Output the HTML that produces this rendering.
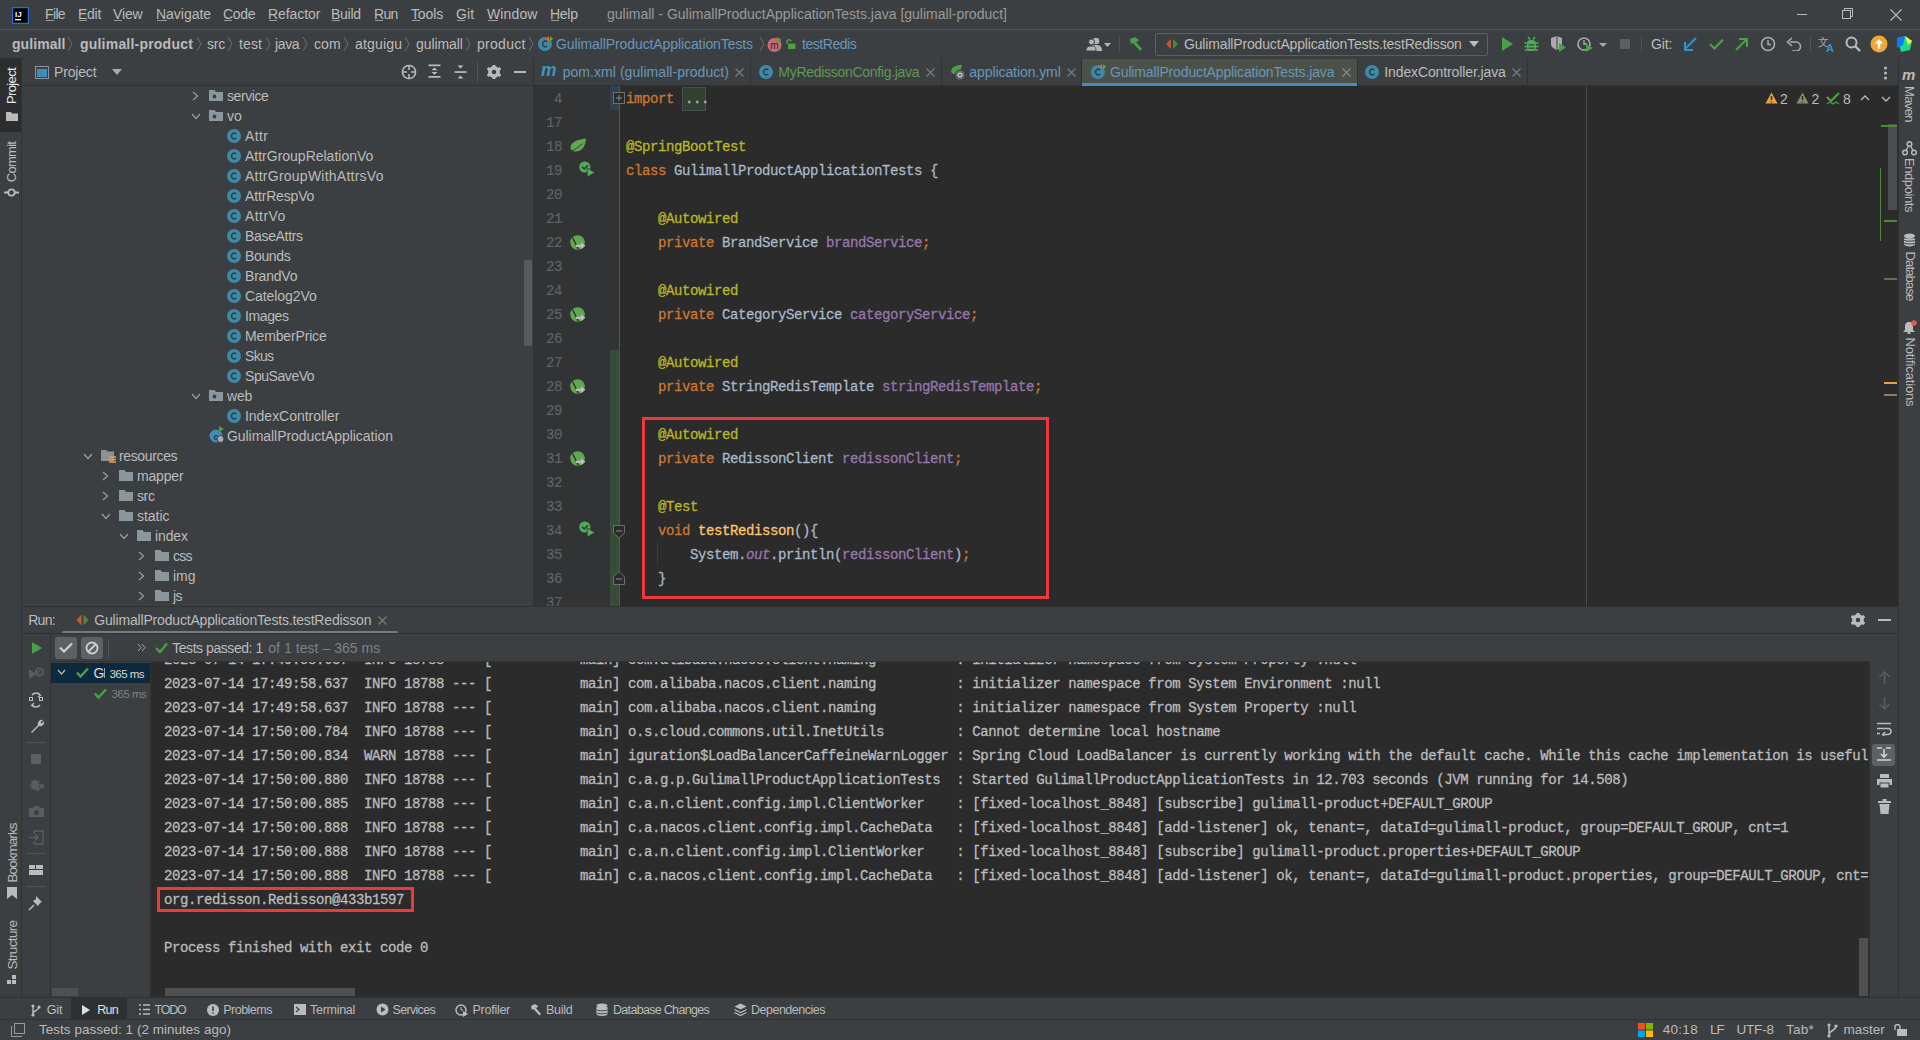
<!DOCTYPE html>
<html><head><meta charset="utf-8"><style>
html,body{margin:0;padding:0;width:1920px;height:1040px;overflow:hidden;background:#3c3f41;}
body>div,body>svg,.abs>div,.abs>svg{position:absolute;}
.t{white-space:pre;}
</style></head><body>
<div style="left:0px;top:0px;width:1920px;height:29px;background:#3c3f41;"></div>
<div style="left:0px;top:29px;width:1920px;height:1px;background:#515456;"></div>
<svg style="left:12px;top:7px;" width="17" height="17" viewBox="0 0 17 17"><rect x="0.5" y="0.5" width="16" height="16" fill="#000" stroke="#1f6fe5" stroke-width="1.5"/><text x="3" y="9.5" font-family="Liberation Sans" font-weight="700" font-size="8" fill="#fff">IJ</text><rect x="3" y="12" width="6" height="1.3" fill="#fff"/></svg>
<div class="t" style="left:45px;top:4.00px;line-height:20px;font-size:14px;color:#bbbbbb;font-weight:400;font-family:'Liberation Sans', sans-serif;letter-spacing:-0.640px;">File</div>
<div style="left:46px;top:20px;width:8px;height:1px;background:#9a9a9a;"></div>
<div class="t" style="left:78px;top:4.00px;line-height:20px;font-size:14px;color:#bbbbbb;font-weight:400;font-family:'Liberation Sans', sans-serif;letter-spacing:-0.281px;">Edit</div>
<div style="left:79px;top:20px;width:8px;height:1px;background:#9a9a9a;"></div>
<div class="t" style="left:113px;top:4.00px;line-height:20px;font-size:14px;color:#bbbbbb;font-weight:400;font-family:'Liberation Sans', sans-serif;letter-spacing:-0.123px;">View</div>
<div style="left:114px;top:20px;width:8px;height:1px;background:#9a9a9a;"></div>
<div class="t" style="left:156px;top:4.00px;line-height:20px;font-size:14px;color:#bbbbbb;font-weight:400;font-family:'Liberation Sans', sans-serif;letter-spacing:-0.032px;">Navigate</div>
<div style="left:157px;top:20px;width:10px;height:1px;background:#9a9a9a;"></div>
<div class="t" style="left:223px;top:4.00px;line-height:20px;font-size:14px;color:#bbbbbb;font-weight:400;font-family:'Liberation Sans', sans-serif;letter-spacing:-0.292px;">Code</div>
<div style="left:224px;top:20px;width:8px;height:1px;background:#9a9a9a;"></div>
<div class="t" style="left:268px;top:4.00px;line-height:20px;font-size:14px;color:#bbbbbb;font-weight:400;font-family:'Liberation Sans', sans-serif;letter-spacing:-0.076px;">Refactor</div>
<div style="left:269px;top:20px;width:8px;height:1px;background:#9a9a9a;"></div>
<div class="t" style="left:331px;top:4.00px;line-height:20px;font-size:14px;color:#bbbbbb;font-weight:400;font-family:'Liberation Sans', sans-serif;letter-spacing:-0.286px;">Build</div>
<div style="left:332px;top:20px;width:8px;height:1px;background:#9a9a9a;"></div>
<div class="t" style="left:374px;top:4.00px;line-height:20px;font-size:14px;color:#bbbbbb;font-weight:400;font-family:'Liberation Sans', sans-serif;letter-spacing:-0.661px;">Run</div>
<div style="left:375px;top:20px;width:8px;height:1px;background:#9a9a9a;"></div>
<div class="t" style="left:411px;top:4.00px;line-height:20px;font-size:14px;color:#bbbbbb;font-weight:400;font-family:'Liberation Sans', sans-serif;letter-spacing:-0.137px;">Tools</div>
<div style="left:412px;top:20px;width:8px;height:1px;background:#9a9a9a;"></div>
<div class="t" style="left:456px;top:4.00px;line-height:20px;font-size:14px;color:#bbbbbb;font-weight:400;font-family:'Liberation Sans', sans-serif;letter-spacing:0.137px;">Git</div>
<div style="left:457px;top:20px;width:8px;height:1px;background:#9a9a9a;"></div>
<div class="t" style="left:487px;top:4.00px;line-height:20px;font-size:14px;color:#bbbbbb;font-weight:400;font-family:'Liberation Sans', sans-serif;letter-spacing:0.134px;">Window</div>
<div style="left:488px;top:20px;width:10px;height:1px;background:#9a9a9a;"></div>
<div class="t" style="left:550px;top:4.00px;line-height:20px;font-size:14px;color:#bbbbbb;font-weight:400;font-family:'Liberation Sans', sans-serif;letter-spacing:-0.273px;">Help</div>
<div style="left:551px;top:20px;width:8px;height:1px;background:#9a9a9a;"></div>
<div class="t" style="left:607px;top:4.00px;line-height:20px;font-size:14px;color:#9a9a9a;font-weight:400;font-family:'Liberation Sans', sans-serif;letter-spacing:0.001px;">gulimall - GulimallProductApplicationTests.java [gulimall-product]</div>
<div style="left:1797px;top:14px;width:10px;height:1px;background:#bbbbbb;"></div>
<svg style="left:1842px;top:8px;" width="13" height="12" viewBox="0 0 13 12"><rect x="0.5" y="2.5" width="8" height="8" fill="none" stroke="#bbb"/><path d="M2.5 2.5V0.5H10.5V8.5H8.5" fill="none" stroke="#bbb"/></svg>
<svg style="left:1890px;top:9px;" width="12" height="12" viewBox="0 0 12 12"><path d="M0.5 0.5L11.5 11.5M11.5 0.5L0.5 11.5" stroke="#bbb" stroke-width="1.1"/></svg>
<div style="left:0px;top:30px;width:1920px;height:28px;background:#3c3f41;"></div>
<div style="left:0px;top:58px;width:1920px;height:1px;background:#2f3133;"></div>
<div class="t" style="left:12px;top:34.00px;line-height:20px;font-size:14px;color:#bbbbbb;font-weight:700;font-family:'Liberation Sans', sans-serif;letter-spacing:0.063px;">gulimall</div>
<svg style="left:67px;top:36px;" width="7" height="16" viewBox="0 0 7 16"><path d="M1 1L5 8L1 15" fill="none" stroke="#6e6e6e" stroke-width="1"/></svg>
<div class="t" style="left:80px;top:34.00px;line-height:20px;font-size:14px;color:#bbbbbb;font-weight:700;font-family:'Liberation Sans', sans-serif;letter-spacing:0.209px;">gulimall-product</div>
<svg style="left:196px;top:36px;" width="7" height="16" viewBox="0 0 7 16"><path d="M1 1L5 8L1 15" fill="none" stroke="#6e6e6e" stroke-width="1"/></svg>
<div class="t" style="left:207px;top:34.00px;line-height:20px;font-size:14px;color:#bbbbbb;font-weight:400;font-family:'Liberation Sans', sans-serif;letter-spacing:-0.221px;">src</div>
<svg style="left:227px;top:36px;" width="7" height="16" viewBox="0 0 7 16"><path d="M1 1L5 8L1 15" fill="none" stroke="#6e6e6e" stroke-width="1"/></svg>
<div class="t" style="left:239px;top:34.00px;line-height:20px;font-size:14px;color:#bbbbbb;font-weight:400;font-family:'Liberation Sans', sans-serif;letter-spacing:0.109px;">test</div>
<svg style="left:265px;top:36px;" width="7" height="16" viewBox="0 0 7 16"><path d="M1 1L5 8L1 15" fill="none" stroke="#6e6e6e" stroke-width="1"/></svg>
<div class="t" style="left:275px;top:34.00px;line-height:20px;font-size:14px;color:#bbbbbb;font-weight:400;font-family:'Liberation Sans', sans-serif;letter-spacing:-0.346px;">java</div>
<svg style="left:302px;top:36px;" width="7" height="16" viewBox="0 0 7 16"><path d="M1 1L5 8L1 15" fill="none" stroke="#6e6e6e" stroke-width="1"/></svg>
<div class="t" style="left:314px;top:34.00px;line-height:20px;font-size:14px;color:#bbbbbb;font-weight:400;font-family:'Liberation Sans', sans-serif;letter-spacing:0.084px;">com</div>
<svg style="left:343px;top:36px;" width="7" height="16" viewBox="0 0 7 16"><path d="M1 1L5 8L1 15" fill="none" stroke="#6e6e6e" stroke-width="1"/></svg>
<div class="t" style="left:355px;top:34.00px;line-height:20px;font-size:14px;color:#bbbbbb;font-weight:400;font-family:'Liberation Sans', sans-serif;letter-spacing:0.196px;">atguigu</div>
<svg style="left:404px;top:36px;" width="7" height="16" viewBox="0 0 7 16"><path d="M1 1L5 8L1 15" fill="none" stroke="#6e6e6e" stroke-width="1"/></svg>
<div class="t" style="left:416px;top:34.00px;line-height:20px;font-size:14px;color:#bbbbbb;font-weight:400;font-family:'Liberation Sans', sans-serif;letter-spacing:-0.095px;">gulimall</div>
<svg style="left:465px;top:36px;" width="7" height="16" viewBox="0 0 7 16"><path d="M1 1L5 8L1 15" fill="none" stroke="#6e6e6e" stroke-width="1"/></svg>
<div class="t" style="left:477px;top:34.00px;line-height:20px;font-size:14px;color:#bbbbbb;font-weight:400;font-family:'Liberation Sans', sans-serif;letter-spacing:0.286px;">product</div>
<svg style="left:528px;top:36px;" width="7" height="16" viewBox="0 0 7 16"><path d="M1 1L5 8L1 15" fill="none" stroke="#6e6e6e" stroke-width="1"/></svg>
<svg style="left:538px;top:36px;" width="16" height="16" viewBox="0 0 16 16"><circle cx="7.0" cy="8.0" r="7.0" fill="#4089a6"/><path d="M9.24 5.90A2.80 2.80 0 1 0 9.24 10.10" fill="none" stroke="#233f4b" stroke-width="1.3"/><path d="M11 0L8 2.7L11 5.4Z" fill="#f26522"/><path d="M12 0L15.2 2.7L12 5.4Z" fill="#59a83a"/></svg>
<div class="t" style="left:556px;top:34.00px;line-height:20px;font-size:14px;color:#6897bb;font-weight:400;font-family:'Liberation Sans', sans-serif;letter-spacing:-0.096px;">GulimallProductApplicationTests</div>
<svg style="left:759px;top:36px;" width="7" height="16" viewBox="0 0 7 16"><path d="M1 1L5 8L1 15" fill="none" stroke="#6e6e6e" stroke-width="1"/></svg>
<svg style="left:767px;top:36px;" width="19" height="17" viewBox="0 0 19 17"><circle cx="7.5" cy="9" r="7" fill="#c46c79"/><text x="7.5" y="12.5" text-anchor="middle" font-family="Liberation Sans" font-size="10" fill="#2e2224">m</text><path d="M10.5 1L7 4L10.5 7Z" fill="#e0622d"/><path d="M11 1L14.5 4L11 7Z" fill="#4aa046"/></svg>
<svg style="left:786px;top:39px;" width="10" height="10" viewBox="0 0 10 10"><rect x="2" y="4.5" width="7.5" height="5.5" fill="#4aa046"/><path d="M1 5V3A2 2 0 0 1 5 2.5" fill="none" stroke="#4aa046" stroke-width="1.5"/></svg>
<div class="t" style="left:802px;top:34.00px;line-height:20px;font-size:14px;color:#6897bb;font-weight:400;font-family:'Liberation Sans', sans-serif;letter-spacing:-0.451px;">testRedis</div>
<svg style="left:1086px;top:36px;" width="26" height="16" viewBox="0 0 26 16"><circle cx="10" cy="5" r="3.3" fill="#b4b4b4"/><path d="M4 15C4 10 6.5 9 10 9S16 10 16 15Z" fill="#b4b4b4"/><circle cx="5.5" cy="6" r="3" fill="#b4b4b4" stroke="#3c3f41" stroke-width="1"/><path d="M0 15C0 11 2 10 5.5 10S10 11 10 15Z" fill="#b4b4b4" stroke="#3c3f41" stroke-width="1"/><path d="M18 7H25L21.5 11Z" fill="#b4b4b4"/></svg>
<div style="left:1119px;top:36px;width:1px;height:16px;background:#515456;"></div>
<svg style="left:1127px;top:36px;" width="17" height="16" viewBox="0 0 17 16"><path d="M3 3L8 1L12 4L10 6L8 5L15 13L13 15L6 7L4 8Z" fill="#4aa046"/></svg>
<div style="left:1155px;top:33px;width:331px;height:21px;border:1px solid #5e6060;border-radius:2px;box-sizing:content-box;"></div>
<svg style="left:1165px;top:38px;" width="14" height="12" viewBox="0 0 14 12"><path d="M6 1L1 6L6 11Z" fill="#c6582a"/><path d="M8 1L13 6L8 11Z" fill="#4a8a3a"/></svg>
<div class="t" style="left:1184px;top:34.00px;line-height:20px;font-size:14px;color:#bbbbbb;font-weight:400;font-family:'Liberation Sans', sans-serif;letter-spacing:-0.161px;">GulimallProductApplicationTests.testRedisson</div>
<svg style="left:1469px;top:41px;" width="10" height="6" viewBox="0 0 10 6"><path d="M0 0H10L5 6Z" fill="#bbb"/></svg>
<svg style="left:1501px;top:37px;" width="12" height="14" viewBox="0 0 12 14"><path d="M1 0L12 7L1 14Z" fill="#4aa046"/></svg>
<svg style="left:1524px;top:36px;" width="15" height="16" viewBox="0 0 15 16"><rect x="3" y="4" width="9" height="11" rx="4" fill="#4fad5b"/><path d="M0.5 7H14.5M0.5 10.5H14.5M1 14H14M4 1L6 3.5M11 1L9 3.5" stroke="#4fad5b" stroke-width="1.6"/><path d="M4.5 8.8H10.5M4.5 12.2H10.5" stroke="#3c3f41" stroke-width="1.3"/></svg>
<svg style="left:1550px;top:36px;" width="17" height="17" viewBox="0 0 17 17"><path d="M1 2L7 0L12 2V8C12 12 7 14 7 14C7 14 1 12 1 8Z" fill="#aaa"/><path d="M7 0V14" stroke="#3c3f41"/><path d="M9 7L16 11.5L9 16Z" fill="#4aa046"/></svg>
<svg style="left:1577px;top:36px;" width="31" height="17" viewBox="0 0 31 17"><circle cx="7" cy="8" r="6" fill="none" stroke="#aaa" stroke-width="1.6"/><path d="M7 4V8H10" stroke="#aaa" stroke-width="1.4" fill="none"/><path d="M9 8L16 12L9 16Z" fill="#4aa046"/><path d="M22 7H30L26 11Z" fill="#aaa"/></svg>
<div style="left:1620px;top:39px;width:10px;height:10px;background:#5f5f5f;"></div>
<div style="left:1641px;top:36px;width:1px;height:16px;background:#515456;"></div>
<div class="t" style="left:1651px;top:34.00px;line-height:20px;font-size:14px;color:#bbbbbb;font-weight:400;font-family:'Liberation Sans', sans-serif;letter-spacing:-0.120px;">Git:</div>
<svg style="left:1683px;top:37px;" width="15" height="15" viewBox="0 0 15 15"><path d="M13 1L2 12M2 5V13H10" fill="none" stroke="#3592c4" stroke-width="2"/></svg>
<svg style="left:1709px;top:38px;" width="15" height="12" viewBox="0 0 15 12"><path d="M1 6L5.5 10.5L14 1.5" fill="none" stroke="#4aa046" stroke-width="2.2"/></svg>
<svg style="left:1734px;top:37px;" width="15" height="15" viewBox="0 0 15 15"><path d="M2 13L13 2M5 2H13V10" fill="none" stroke="#4aa046" stroke-width="2"/></svg>
<svg style="left:1760px;top:36px;" width="16" height="16" viewBox="0 0 16 16"><circle cx="8" cy="8" r="6.5" fill="none" stroke="#aaa" stroke-width="1.6"/><path d="M8 4V8.5H11" stroke="#aaa" stroke-width="1.5" fill="none"/></svg>
<svg style="left:1786px;top:37px;" width="16" height="14" viewBox="0 0 16 14"><path d="M4 5H10A4.5 4.5 0 0 1 10 14H6" fill="none" stroke="#aaa" stroke-width="1.6"/><path d="M6 1L1.5 5L6 9" fill="none" stroke="#aaa" stroke-width="1.6"/></svg>
<div style="left:1810px;top:36px;width:1px;height:16px;background:#515456;"></div>
<svg style="left:1818px;top:35px;" width="18" height="18" viewBox="0 0 18 18"><text x="0" y="11" font-family="Liberation Sans" font-size="11" fill="#aaa">文</text><text x="8" y="17" font-family="Liberation Sans" font-weight="700" font-size="11" fill="#3592c4">A</text></svg>
<svg style="left:1845px;top:36px;" width="16" height="16" viewBox="0 0 16 16"><circle cx="6.5" cy="6.5" r="5" fill="none" stroke="#bbb" stroke-width="2"/><path d="M10 10L15 15" stroke="#bbb" stroke-width="2.4"/></svg>
<svg style="left:1870px;top:35px;" width="18" height="18" viewBox="0 0 18 18"><circle cx="9" cy="9" r="8.5" fill="#f0a732"/><path d="M9 4L5 8.5H7.8V14H10.2V8.5H13Z" fill="#fff"/></svg>
<svg style="left:1896px;top:35px;" width="17" height="18" viewBox="0 0 17 18"><path d="M1 3L9 1L16 6L14 15L5 17Z" fill="#21d789"/><path d="M1 3L9 1L7 10L1 13Z" fill="#087cfa"/><path d="M9 1L16 6L12 10Z" fill="#fcf84a"/></svg>
<div style="left:0px;top:59px;width:22px;height:938px;background:#3c3f41;"></div>
<div style="left:21px;top:59px;width:1px;height:938px;background:#323232;"></div>
<div style="left:0px;top:59px;width:21px;height:73px;background:#2b2d2f;"></div>
<div class="t" style="left:-16.0px;top:78.0px;width:56px;height:16px;line-height:16px;text-align:center;transform:rotate(-90deg);font-family:'Liberation Sans',sans-serif;font-size:13px;letter-spacing:-0.637px;color:#e6e6e6;">Project</div>
<svg style="left:6px;top:111px;" width="12" height="10" viewBox="0 0 12 10"><path d="M0 1H5L6 2.5H13V10H0Z" fill="#bbb"/></svg>
<div class="t" style="left:-18.2px;top:153.8px;width:60.5px;height:16px;line-height:16px;text-align:center;transform:rotate(-90deg);font-family:'Liberation Sans',sans-serif;font-size:13px;letter-spacing:-0.713px;color:#bbbbbb;">Commit</div>
<svg style="left:4px;top:187px;" width="15" height="11" viewBox="0 0 15 11"><circle cx="7.5" cy="5.5" r="3.2" fill="none" stroke="#bbb" stroke-width="1.8"/><path d="M0 5.5H4M11 5.5H15" stroke="#bbb" stroke-width="1.8"/></svg>
<div class="t" style="left:-27.5px;top:844.5px;width:79px;height:16px;line-height:16px;text-align:center;transform:rotate(-90deg);font-family:'Liberation Sans',sans-serif;font-size:13.5px;letter-spacing:-0.947px;color:#bbbbbb;">Bookmarks</div>
<svg style="left:7px;top:887px;" width="10" height="12" viewBox="0 0 10 12"><path d="M0 0H10V12L5 8L0 12Z" fill="#bbb"/></svg>
<div class="t" style="left:-22.5px;top:936.5px;width:69px;height:16px;line-height:16px;text-align:center;transform:rotate(-90deg);font-family:'Liberation Sans',sans-serif;font-size:13.5px;letter-spacing:-0.641px;color:#bbbbbb;">Structure</div>
<svg style="left:7px;top:975px;" width="10" height="10" viewBox="0 0 10 10"><rect x="5" y="0" width="4" height="4" fill="#bbb"/><rect x="0" y="5" width="4" height="4" fill="#bbb"/><rect x="5" y="5" width="4" height="4" fill="#bbb"/></svg>
<div style="left:1898px;top:58px;width:22px;height:939px;background:#3c3f41;"></div>
<div style="left:1898px;top:58px;width:1px;height:939px;background:#323232;"></div>
<svg style="left:1902px;top:68px;" width="15" height="13" viewBox="0 0 15 13"><text x="0" y="12" font-family="Liberation Sans" font-style="italic" font-weight="700" font-size="15" fill="#bbb">m</text></svg>
<div class="t" style="left:1881.0px;top:96.0px;width:56px;height:16px;line-height:16px;text-align:center;transform:rotate(90deg);font-family:'Liberation Sans',sans-serif;font-size:13px;letter-spacing:-0.604px;color:#bbbbbb;">Maven</div>
<svg style="left:1902px;top:141px;" width="15" height="15" viewBox="0 0 15 15"><circle cx="7.5" cy="3" r="2.3" fill="none" stroke="#bbb" stroke-width="1.5"/><circle cx="3" cy="11.5" r="2.3" fill="none" stroke="#bbb" stroke-width="1.5"/><circle cx="12" cy="11.5" r="2.3" fill="none" stroke="#bbb" stroke-width="1.5"/><path d="M6.5 5L4 9.5M8.5 5L11 9.5" stroke="#bbb" stroke-width="1.4"/></svg>
<div class="t" style="left:1872.0px;top:177.0px;width:74px;height:16px;line-height:16px;text-align:center;transform:rotate(90deg);font-family:'Liberation Sans',sans-serif;font-size:13px;letter-spacing:-0.425px;color:#bbbbbb;">Endpoints</div>
<svg style="left:1903px;top:233px;" width="13" height="14" viewBox="0 0 13 14"><ellipse cx="6.5" cy="3" rx="5.5" ry="2.5" fill="#bbb"/><path d="M1 5.5V11C1 12.5 3.5 13.5 6.5 13.5S12 12.5 12 11V5.5" fill="#bbb"/><path d="M1 7.2C2 8.5 11 8.5 12 7.2M1 10C2 11.3 11 11.3 12 10" stroke="#3c3f41" fill="none"/></svg>
<div class="t" style="left:1874.5px;top:267.5px;width:69px;height:16px;line-height:16px;text-align:center;transform:rotate(90deg);font-family:'Liberation Sans',sans-serif;font-size:13px;letter-spacing:-0.831px;color:#bbbbbb;">Database</div>
<svg style="left:1902px;top:320px;" width="15" height="14" viewBox="0 0 15 14"><path d="M7 2C4 2 3 4 3 7V10L1 12H13L11 10V7C11 4 10 2 7 2Z" fill="#bbb"/><circle cx="7" cy="13" r="1.5" fill="#bbb"/><circle cx="12" cy="3" r="2.8" fill="#e55757"/></svg>
<div class="t" style="left:1864.5px;top:363.5px;width:89px;height:16px;line-height:16px;text-align:center;transform:rotate(90deg);font-family:'Liberation Sans',sans-serif;font-size:13px;letter-spacing:-0.139px;color:#bbbbbb;">Notifications</div>
<div style="left:22px;top:58px;width:511px;height:548px;background:#3c3f41;"></div>
<div style="left:22px;top:85px;width:511px;height:1px;background:#323232;"></div>
<svg style="left:35px;top:66px;" width="14" height="13" viewBox="0 0 14 13"><rect x="0.5" y="0.5" width="13" height="12" fill="none" stroke="#8a9399"/><rect x="2" y="3" width="10" height="8" fill="#3d8eb9"/></svg>
<div class="t" style="left:54px;top:62.00px;line-height:20px;font-size:14px;color:#bbbbbb;font-weight:400;font-family:'Liberation Sans', sans-serif;letter-spacing:-0.168px;">Project</div>
<svg style="left:112px;top:69px;" width="10" height="6" viewBox="0 0 10 6"><path d="M0 0H10L5 6Z" fill="#aaa"/></svg>
<svg style="left:401px;top:64px;" width="16" height="16" viewBox="0 0 16 16"><circle cx="8" cy="8" r="6.6" fill="none" stroke="#bbb" stroke-width="1.5"/><path d="M8 2V6M8 10V14M2 8H6M10 8H14" stroke="#bbb" stroke-width="1.5"/></svg>
<svg style="left:428px;top:64px;" width="13" height="14" viewBox="0 0 13 14"><rect x="0.5" y="0.5" width="12" height="1.7" fill="#bbb"/><rect x="0.5" y="12" width="12" height="1.7" fill="#bbb"/><path d="M3.5 6.2H9.5L6.5 3.4Z M3.5 8H9.5L6.5 10.8Z" fill="#bbb"/></svg>
<svg style="left:454px;top:65px;" width="13" height="14" viewBox="0 0 13 14"><rect x="0.5" y="6.2" width="12" height="1.7" fill="#bbb"/><path d="M3.5 0.5H9.5L6.5 3.5Z M3.5 13.5H9.5L6.5 10.5Z" fill="#bbb"/></svg>
<div style="left:477px;top:62px;width:1px;height:20px;background:#515456;"></div>
<svg style="left:487px;top:65px;" width="14" height="14" viewBox="0 0 14 14"><circle cx="7" cy="7" r="4.1" fill="none" stroke="#bbb" stroke-width="3.6"/><rect x="5.5" y="-0.6" width="3" height="3.5" rx="0.6" fill="#bbb" transform="rotate(0 7 7)"/><rect x="5.5" y="-0.6" width="3" height="3.5" rx="0.6" fill="#bbb" transform="rotate(60 7 7)"/><rect x="5.5" y="-0.6" width="3" height="3.5" rx="0.6" fill="#bbb" transform="rotate(120 7 7)"/><rect x="5.5" y="-0.6" width="3" height="3.5" rx="0.6" fill="#bbb" transform="rotate(180 7 7)"/><rect x="5.5" y="-0.6" width="3" height="3.5" rx="0.6" fill="#bbb" transform="rotate(240 7 7)"/><rect x="5.5" y="-0.6" width="3" height="3.5" rx="0.6" fill="#bbb" transform="rotate(300 7 7)"/></svg>
<div style="left:514px;top:71px;width:12px;height:2px;background:#bbb;"></div>
<div class="abs" style="left:0;top:0;width:533px;height:605px;overflow:hidden;">
<svg style="left:192px;top:91px;" width="7" height="10" viewBox="0 0 7 10"><path d="M1 1L5.5 5L1 9" fill="none" stroke="#9a9a9a" stroke-width="1.3"/></svg>
<svg style="left:209px;top:90px;" width="14" height="12" viewBox="0 0 14 12"><path d="M0 0H5.5L7 2H14V11H0Z" fill="#8c969d"/><circle cx="5.5" cy="6.5" r="1.9" fill="#3c3f41"/></svg>
<div class="t" style="left:227px;top:86.00px;line-height:20px;font-size:14px;color:#bbbbbb;font-weight:400;font-family:'Liberation Sans', sans-serif;letter-spacing:-0.421px;">service</div>
<svg style="left:191px;top:113px;" width="10" height="7" viewBox="0 0 10 7"><path d="M1 1L5 5.5L9 1" fill="none" stroke="#9a9a9a" stroke-width="1.3"/></svg>
<svg style="left:209px;top:110px;" width="14" height="12" viewBox="0 0 14 12"><path d="M0 0H5.5L7 2H14V11H0Z" fill="#8c969d"/><circle cx="5.5" cy="6.5" r="1.9" fill="#3c3f41"/></svg>
<div class="t" style="left:227px;top:106.00px;line-height:20px;font-size:14px;color:#bbbbbb;font-weight:400;font-family:'Liberation Sans', sans-serif;letter-spacing:0.107px;">vo</div>
<svg style="left:227px;top:128px;" width="16" height="16" viewBox="0 0 16 16"><circle cx="7.0" cy="8.0" r="7.0" fill="#4089a6"/><path d="M9.24 5.90A2.80 2.80 0 1 0 9.24 10.10" fill="none" stroke="#233f4b" stroke-width="1.3"/></svg>
<div class="t" style="left:245px;top:126.00px;line-height:20px;font-size:14px;color:#bbbbbb;font-weight:400;font-family:'Liberation Sans', sans-serif;letter-spacing:0.405px;">Attr</div>
<svg style="left:227px;top:148px;" width="16" height="16" viewBox="0 0 16 16"><circle cx="7.0" cy="8.0" r="7.0" fill="#4089a6"/><path d="M9.24 5.90A2.80 2.80 0 1 0 9.24 10.10" fill="none" stroke="#233f4b" stroke-width="1.3"/></svg>
<div class="t" style="left:245px;top:146.00px;line-height:20px;font-size:14px;color:#bbbbbb;font-weight:400;font-family:'Liberation Sans', sans-serif;letter-spacing:-0.006px;">AttrGroupRelationVo</div>
<svg style="left:227px;top:168px;" width="16" height="16" viewBox="0 0 16 16"><circle cx="7.0" cy="8.0" r="7.0" fill="#4089a6"/><path d="M9.24 5.90A2.80 2.80 0 1 0 9.24 10.10" fill="none" stroke="#233f4b" stroke-width="1.3"/></svg>
<div class="t" style="left:245px;top:166.00px;line-height:20px;font-size:14px;color:#bbbbbb;font-weight:400;font-family:'Liberation Sans', sans-serif;letter-spacing:0.244px;">AttrGroupWithAttrsVo</div>
<svg style="left:227px;top:188px;" width="16" height="16" viewBox="0 0 16 16"><circle cx="7.0" cy="8.0" r="7.0" fill="#4089a6"/><path d="M9.24 5.90A2.80 2.80 0 1 0 9.24 10.10" fill="none" stroke="#233f4b" stroke-width="1.3"/></svg>
<div class="t" style="left:245px;top:186.00px;line-height:20px;font-size:14px;color:#bbbbbb;font-weight:400;font-family:'Liberation Sans', sans-serif;letter-spacing:-0.161px;">AttrRespVo</div>
<svg style="left:227px;top:208px;" width="16" height="16" viewBox="0 0 16 16"><circle cx="7.0" cy="8.0" r="7.0" fill="#4089a6"/><path d="M9.24 5.90A2.80 2.80 0 1 0 9.24 10.10" fill="none" stroke="#233f4b" stroke-width="1.3"/></svg>
<div class="t" style="left:245px;top:206.00px;line-height:20px;font-size:14px;color:#bbbbbb;font-weight:400;font-family:'Liberation Sans', sans-serif;letter-spacing:0.445px;">AttrVo</div>
<svg style="left:227px;top:228px;" width="16" height="16" viewBox="0 0 16 16"><circle cx="7.0" cy="8.0" r="7.0" fill="#4089a6"/><path d="M9.24 5.90A2.80 2.80 0 1 0 9.24 10.10" fill="none" stroke="#233f4b" stroke-width="1.3"/></svg>
<div class="t" style="left:245px;top:226.00px;line-height:20px;font-size:14px;color:#bbbbbb;font-weight:400;font-family:'Liberation Sans', sans-serif;letter-spacing:-0.332px;">BaseAttrs</div>
<svg style="left:227px;top:248px;" width="16" height="16" viewBox="0 0 16 16"><circle cx="7.0" cy="8.0" r="7.0" fill="#4089a6"/><path d="M9.24 5.90A2.80 2.80 0 1 0 9.24 10.10" fill="none" stroke="#233f4b" stroke-width="1.3"/></svg>
<div class="t" style="left:245px;top:246.00px;line-height:20px;font-size:14px;color:#bbbbbb;font-weight:400;font-family:'Liberation Sans', sans-serif;letter-spacing:-0.364px;">Bounds</div>
<svg style="left:227px;top:268px;" width="16" height="16" viewBox="0 0 16 16"><circle cx="7.0" cy="8.0" r="7.0" fill="#4089a6"/><path d="M9.24 5.90A2.80 2.80 0 1 0 9.24 10.10" fill="none" stroke="#233f4b" stroke-width="1.3"/></svg>
<div class="t" style="left:245px;top:266.00px;line-height:20px;font-size:14px;color:#bbbbbb;font-weight:400;font-family:'Liberation Sans', sans-serif;letter-spacing:-0.202px;">BrandVo</div>
<svg style="left:227px;top:288px;" width="16" height="16" viewBox="0 0 16 16"><circle cx="7.0" cy="8.0" r="7.0" fill="#4089a6"/><path d="M9.24 5.90A2.80 2.80 0 1 0 9.24 10.10" fill="none" stroke="#233f4b" stroke-width="1.3"/></svg>
<div class="t" style="left:245px;top:286.00px;line-height:20px;font-size:14px;color:#bbbbbb;font-weight:400;font-family:'Liberation Sans', sans-serif;letter-spacing:-0.069px;">Catelog2Vo</div>
<svg style="left:227px;top:308px;" width="16" height="16" viewBox="0 0 16 16"><circle cx="7.0" cy="8.0" r="7.0" fill="#4089a6"/><path d="M9.24 5.90A2.80 2.80 0 1 0 9.24 10.10" fill="none" stroke="#233f4b" stroke-width="1.3"/></svg>
<div class="t" style="left:245px;top:306.00px;line-height:20px;font-size:14px;color:#bbbbbb;font-weight:400;font-family:'Liberation Sans', sans-serif;letter-spacing:-0.385px;">Images</div>
<svg style="left:227px;top:328px;" width="16" height="16" viewBox="0 0 16 16"><circle cx="7.0" cy="8.0" r="7.0" fill="#4089a6"/><path d="M9.24 5.90A2.80 2.80 0 1 0 9.24 10.10" fill="none" stroke="#233f4b" stroke-width="1.3"/></svg>
<div class="t" style="left:245px;top:326.00px;line-height:20px;font-size:14px;color:#bbbbbb;font-weight:400;font-family:'Liberation Sans', sans-serif;letter-spacing:-0.149px;">MemberPrice</div>
<svg style="left:227px;top:348px;" width="16" height="16" viewBox="0 0 16 16"><circle cx="7.0" cy="8.0" r="7.0" fill="#4089a6"/><path d="M9.24 5.90A2.80 2.80 0 1 0 9.24 10.10" fill="none" stroke="#233f4b" stroke-width="1.3"/></svg>
<div class="t" style="left:245px;top:346.00px;line-height:20px;font-size:14px;color:#bbbbbb;font-weight:400;font-family:'Liberation Sans', sans-serif;letter-spacing:-0.681px;">Skus</div>
<svg style="left:227px;top:368px;" width="16" height="16" viewBox="0 0 16 16"><circle cx="7.0" cy="8.0" r="7.0" fill="#4089a6"/><path d="M9.24 5.90A2.80 2.80 0 1 0 9.24 10.10" fill="none" stroke="#233f4b" stroke-width="1.3"/></svg>
<div class="t" style="left:245px;top:366.00px;line-height:20px;font-size:14px;color:#bbbbbb;font-weight:400;font-family:'Liberation Sans', sans-serif;letter-spacing:-0.441px;">SpuSaveVo</div>
<svg style="left:191px;top:393px;" width="10" height="7" viewBox="0 0 10 7"><path d="M1 1L5 5.5L9 1" fill="none" stroke="#9a9a9a" stroke-width="1.3"/></svg>
<svg style="left:209px;top:390px;" width="14" height="12" viewBox="0 0 14 12"><path d="M0 0H5.5L7 2H14V11H0Z" fill="#8c969d"/><circle cx="5.5" cy="6.5" r="1.9" fill="#3c3f41"/></svg>
<div class="t" style="left:227px;top:386.00px;line-height:20px;font-size:14px;color:#bbbbbb;font-weight:400;font-family:'Liberation Sans', sans-serif;letter-spacing:-0.194px;">web</div>
<svg style="left:227px;top:408px;" width="16" height="16" viewBox="0 0 16 16"><circle cx="7.0" cy="8.0" r="7.0" fill="#4089a6"/><path d="M9.24 5.90A2.80 2.80 0 1 0 9.24 10.10" fill="none" stroke="#233f4b" stroke-width="1.3"/></svg>
<div class="t" style="left:245px;top:406.00px;line-height:20px;font-size:14px;color:#bbbbbb;font-weight:400;font-family:'Liberation Sans', sans-serif;letter-spacing:-0.029px;">IndexController</div>
<svg style="left:209px;top:426px;" width="18" height="18" viewBox="0 0 18 18"><circle cx="7" cy="10" r="6.5" fill="#3d8eb9"/><text x="7" y="13.5" text-anchor="middle" font-family="Liberation Sans" font-size="9" font-weight="700" fill="#1f3a48">c</text><path d="M10 0L15 3L10 6Z" fill="#4aa046"/><circle cx="11.5" cy="13" r="3.5" fill="#aaa" stroke="#3c3f41"/></svg>
<div class="t" style="left:227px;top:426.00px;line-height:20px;font-size:14px;color:#bbbbbb;font-weight:400;font-family:'Liberation Sans', sans-serif;letter-spacing:-0.054px;">GulimallProductApplication</div>
<svg style="left:83px;top:453px;" width="10" height="7" viewBox="0 0 10 7"><path d="M1 1L5 5.5L9 1" fill="none" stroke="#9a9a9a" stroke-width="1.3"/></svg>
<svg style="left:101px;top:449px;" width="16" height="15" viewBox="0 0 16 15"><path d="M0 1H5L6.5 2.5H13V12H0Z" fill="#8e9297"/><path d="M8 8H15M8 10.5H15M8 13H15" stroke="#e8a33e" stroke-width="1.3"/></svg>
<div class="t" style="left:119px;top:446.00px;line-height:20px;font-size:14px;color:#bbbbbb;font-weight:400;font-family:'Liberation Sans', sans-serif;letter-spacing:-0.363px;">resources</div>
<svg style="left:102px;top:471px;" width="7" height="10" viewBox="0 0 7 10"><path d="M1 1L5.5 5L1 9" fill="none" stroke="#9a9a9a" stroke-width="1.3"/></svg>
<svg style="left:119px;top:470px;" width="14" height="12" viewBox="0 0 14 12"><path d="M0 0H5.5L7 2H14V11H0Z" fill="#8c969d"/></svg>
<div class="t" style="left:137px;top:466.00px;line-height:20px;font-size:14px;color:#bbbbbb;font-weight:400;font-family:'Liberation Sans', sans-serif;letter-spacing:-0.178px;">mapper</div>
<svg style="left:102px;top:491px;" width="7" height="10" viewBox="0 0 7 10"><path d="M1 1L5.5 5L1 9" fill="none" stroke="#9a9a9a" stroke-width="1.3"/></svg>
<svg style="left:119px;top:490px;" width="14" height="12" viewBox="0 0 14 12"><path d="M0 0H5.5L7 2H14V11H0Z" fill="#8c969d"/></svg>
<div class="t" style="left:137px;top:486.00px;line-height:20px;font-size:14px;color:#bbbbbb;font-weight:400;font-family:'Liberation Sans', sans-serif;letter-spacing:-0.387px;">src</div>
<svg style="left:101px;top:513px;" width="10" height="7" viewBox="0 0 10 7"><path d="M1 1L5 5.5L9 1" fill="none" stroke="#9a9a9a" stroke-width="1.3"/></svg>
<svg style="left:119px;top:510px;" width="14" height="12" viewBox="0 0 14 12"><path d="M0 0H5.5L7 2H14V11H0Z" fill="#8c969d"/></svg>
<div class="t" style="left:137px;top:506.00px;line-height:20px;font-size:14px;color:#bbbbbb;font-weight:400;font-family:'Liberation Sans', sans-serif;letter-spacing:-0.046px;">static</div>
<svg style="left:119px;top:533px;" width="10" height="7" viewBox="0 0 10 7"><path d="M1 1L5 5.5L9 1" fill="none" stroke="#9a9a9a" stroke-width="1.3"/></svg>
<svg style="left:137px;top:530px;" width="14" height="12" viewBox="0 0 14 12"><path d="M0 0H5.5L7 2H14V11H0Z" fill="#8c969d"/></svg>
<div class="t" style="left:155px;top:526.00px;line-height:20px;font-size:14px;color:#bbbbbb;font-weight:400;font-family:'Liberation Sans', sans-serif;letter-spacing:-0.114px;">index</div>
<svg style="left:138px;top:551px;" width="7" height="10" viewBox="0 0 7 10"><path d="M1 1L5.5 5L1 9" fill="none" stroke="#9a9a9a" stroke-width="1.3"/></svg>
<svg style="left:155px;top:550px;" width="14" height="12" viewBox="0 0 14 12"><path d="M0 0H5.5L7 2H14V11H0Z" fill="#8c969d"/></svg>
<div class="t" style="left:173px;top:546.00px;line-height:20px;font-size:14px;color:#bbbbbb;font-weight:400;font-family:'Liberation Sans', sans-serif;letter-spacing:-0.733px;">css</div>
<svg style="left:138px;top:571px;" width="7" height="10" viewBox="0 0 7 10"><path d="M1 1L5.5 5L1 9" fill="none" stroke="#9a9a9a" stroke-width="1.3"/></svg>
<svg style="left:155px;top:570px;" width="14" height="12" viewBox="0 0 14 12"><path d="M0 0H5.5L7 2H14V11H0Z" fill="#8c969d"/></svg>
<div class="t" style="left:173px;top:566.00px;line-height:20px;font-size:14px;color:#bbbbbb;font-weight:400;font-family:'Liberation Sans', sans-serif;letter-spacing:-0.053px;">img</div>
<svg style="left:138px;top:591px;" width="7" height="10" viewBox="0 0 7 10"><path d="M1 1L5.5 5L1 9" fill="none" stroke="#9a9a9a" stroke-width="1.3"/></svg>
<svg style="left:155px;top:590px;" width="14" height="12" viewBox="0 0 14 12"><path d="M0 0H5.5L7 2H14V11H0Z" fill="#8c969d"/></svg>
<div class="t" style="left:173px;top:586.00px;line-height:20px;font-size:14px;color:#bbbbbb;font-weight:400;font-family:'Liberation Sans', sans-serif;letter-spacing:-0.555px;">js</div>
</div>
<div style="left:524px;top:260px;width:8px;height:86px;background:#58595b;border-radius:1px;"></div>
<div style="left:533px;top:58px;width:1px;height:548px;background:#323232;"></div>
<div style="left:534px;top:58px;width:1364px;height:28px;background:#3c3f41;"></div>
<div style="left:534px;top:85px;width:1364px;height:1px;background:#323232;"></div>
<svg style="left:541px;top:63px;" width="19" height="16" viewBox="0 0 19 16"><text x="0" y="13" font-family="Liberation Sans" font-style="italic" font-weight="700" font-size="17.5" fill="#3b96c2">m</text></svg>
<div class="t" style="left:562.7px;top:62.00px;line-height:20px;font-size:14px;color:#6897bb;font-weight:400;font-family:'Liberation Sans', sans-serif;letter-spacing:0.053px;">pom.xml (gulimall-product)</div>
<svg style="left:735px;top:68px;" width="9" height="9" viewBox="0 0 9 9"><path d="M0.5 0.5L8.5 8.5M8.5 0.5L0.5 8.5" stroke="#7b7e80" stroke-width="1.1"/></svg>
<div style="left:750px;top:58px;width:1px;height:27px;background:#323232;"></div>
<svg style="left:759px;top:64px;" width="16" height="16" viewBox="0 0 16 16"><circle cx="7.0" cy="8.0" r="7.0" fill="#4089a6"/><path d="M9.24 5.90A2.80 2.80 0 1 0 9.24 10.10" fill="none" stroke="#233f4b" stroke-width="1.3"/></svg>
<div class="t" style="left:778.3px;top:62.00px;line-height:20px;font-size:14px;color:#629755;font-weight:400;font-family:'Liberation Sans', sans-serif;letter-spacing:-0.289px;">MyRedissonConfig.java</div>
<svg style="left:926px;top:68px;" width="9" height="9" viewBox="0 0 9 9"><path d="M0.5 0.5L8.5 8.5M8.5 0.5L0.5 8.5" stroke="#7b7e80" stroke-width="1.1"/></svg>
<div style="left:941px;top:58px;width:1px;height:27px;background:#323232;"></div>
<svg style="left:950px;top:64px;" width="17" height="17" viewBox="0 0 17 17"><path d="M1 8C1 3 6 1 12 1C11 6 9 10 3 10Z" fill="#4aa046"/><circle cx="10" cy="11" r="5" fill="#6b6e70" stroke="#3c3f41"/><circle cx="10" cy="11" r="2" fill="none" stroke="#ddd"/></svg>
<div class="t" style="left:969.3px;top:62.00px;line-height:20px;font-size:14px;color:#6897bb;font-weight:400;font-family:'Liberation Sans', sans-serif;letter-spacing:-0.080px;">application.yml</div>
<svg style="left:1067px;top:68px;" width="9" height="9" viewBox="0 0 9 9"><path d="M0.5 0.5L8.5 8.5M8.5 0.5L0.5 8.5" stroke="#7b7e80" stroke-width="1.1"/></svg>
<div style="left:1081px;top:58px;width:1px;height:27px;background:#323232;"></div>
<div style="left:1082px;top:59px;width:275px;height:24px;background:#4b5148;"></div>
<div style="left:1082px;top:83px;width:275px;height:3px;background:#4a88c7;"></div>
<svg style="left:1091px;top:64px;" width="16" height="16" viewBox="0 0 16 16"><circle cx="7.0" cy="8.0" r="7.0" fill="#4089a6"/><path d="M9.24 5.90A2.80 2.80 0 1 0 9.24 10.10" fill="none" stroke="#233f4b" stroke-width="1.3"/><path d="M11 0L8 2.7L11 5.4Z" fill="#f26522"/><path d="M12 0L15.2 2.7L12 5.4Z" fill="#59a83a"/></svg>
<div class="t" style="left:1110px;top:62.00px;line-height:20px;font-size:14px;color:#6897bb;font-weight:400;font-family:'Liberation Sans', sans-serif;letter-spacing:-0.146px;">GulimallProductApplicationTests.java</div>
<svg style="left:1342px;top:68px;" width="9" height="9" viewBox="0 0 9 9"><path d="M0.5 0.5L8.5 8.5M8.5 0.5L0.5 8.5" stroke="#8a8e88" stroke-width="1.1"/></svg>
<div style="left:1357px;top:58px;width:1px;height:27px;background:#323232;"></div>
<svg style="left:1365px;top:64px;" width="16" height="16" viewBox="0 0 16 16"><circle cx="7.0" cy="8.0" r="7.0" fill="#4089a6"/><path d="M9.24 5.90A2.80 2.80 0 1 0 9.24 10.10" fill="none" stroke="#233f4b" stroke-width="1.3"/></svg>
<div class="t" style="left:1384.3px;top:62.00px;line-height:20px;font-size:14px;color:#bbbbbb;font-weight:400;font-family:'Liberation Sans', sans-serif;letter-spacing:-0.117px;">IndexController.java</div>
<svg style="left:1512px;top:68px;" width="9" height="9" viewBox="0 0 9 9"><path d="M0.5 0.5L8.5 8.5M8.5 0.5L0.5 8.5" stroke="#7b7e80" stroke-width="1.1"/></svg>
<div style="left:1527px;top:58px;width:1px;height:27px;background:#323232;"></div>
<svg style="left:1883px;top:66px;" width="5" height="14" viewBox="0 0 5 14"><circle cx="2.5" cy="2" r="1.5" fill="#bbb"/><circle cx="2.5" cy="7" r="1.5" fill="#bbb"/><circle cx="2.5" cy="12" r="1.5" fill="#bbb"/></svg>
<div style="left:534px;top:86px;width:1364px;height:520px;background:#2b2b2b;"></div>
<div style="left:534px;top:86px;width:86px;height:520px;background:#313335;"></div>
<div style="left:619px;top:86px;width:1px;height:520px;background:#555555;"></div>
<div style="left:1586px;top:86px;width:1px;height:520px;background:#4b4b4b;"></div>
<div style="left:610px;top:350px;width:9px;height:256px;background:#384c38;"></div>
<div style="left:610px;top:86px;width:9px;height:24px;background:#2f4254;"></div>
<div class="abs" style="left:534px;top:86px;width:1364px;height:520px;overflow:hidden;">
<div class="t" style="left:20px;top:0.50px;line-height:24px;font-size:14px;color:#606366;font-weight:400;font-family:'Liberation Mono', monospace;letter-spacing:-0.400px;-webkit-text-stroke:0.2px #606366;">4</div>
<div class="t" style="left:92px;top:0.50px;line-height:24px;font-size:14px;color:#cc7832;font-weight:400;font-family:'Liberation Mono', monospace;letter-spacing:-0.400px;-webkit-text-stroke:0.3px #cc7832;">import</div>
<div class="t" style="left:140px;top:0.50px;line-height:24px;font-size:14px;color:#a9b7c6;font-weight:400;font-family:'Liberation Mono', monospace;letter-spacing:-0.400px;-webkit-text-stroke:0.3px #a9b7c6;"> </div>
<div class="t" style="left:12px;top:24.50px;line-height:24px;font-size:14px;color:#606366;font-weight:400;font-family:'Liberation Mono', monospace;letter-spacing:-0.400px;-webkit-text-stroke:0.2px #606366;">17</div>
<div class="t" style="left:12px;top:48.50px;line-height:24px;font-size:14px;color:#606366;font-weight:400;font-family:'Liberation Mono', monospace;letter-spacing:-0.400px;-webkit-text-stroke:0.2px #606366;">18</div>
<div class="t" style="left:92px;top:48.50px;line-height:24px;font-size:14px;color:#bbb529;font-weight:400;font-family:'Liberation Mono', monospace;letter-spacing:-0.400px;-webkit-text-stroke:0.3px #bbb529;">@SpringBootTest</div>
<div class="t" style="left:12px;top:72.50px;line-height:24px;font-size:14px;color:#606366;font-weight:400;font-family:'Liberation Mono', monospace;letter-spacing:-0.400px;-webkit-text-stroke:0.2px #606366;">19</div>
<div class="t" style="left:92px;top:72.50px;line-height:24px;font-size:14px;color:#cc7832;font-weight:400;font-family:'Liberation Mono', monospace;letter-spacing:-0.400px;-webkit-text-stroke:0.3px #cc7832;">class</div>
<div class="t" style="left:132px;top:72.50px;line-height:24px;font-size:14px;color:#a9b7c6;font-weight:400;font-family:'Liberation Mono', monospace;letter-spacing:-0.400px;-webkit-text-stroke:0.3px #a9b7c6;"> GulimallProductApplicationTests {</div>
<div class="t" style="left:12px;top:96.50px;line-height:24px;font-size:14px;color:#606366;font-weight:400;font-family:'Liberation Mono', monospace;letter-spacing:-0.400px;-webkit-text-stroke:0.2px #606366;">20</div>
<div class="t" style="left:12px;top:120.50px;line-height:24px;font-size:14px;color:#606366;font-weight:400;font-family:'Liberation Mono', monospace;letter-spacing:-0.400px;-webkit-text-stroke:0.2px #606366;">21</div>
<div class="t" style="left:92px;top:120.50px;line-height:24px;font-size:14px;color:#bbb529;font-weight:400;font-family:'Liberation Mono', monospace;letter-spacing:-0.400px;-webkit-text-stroke:0.3px #bbb529;">    @Autowired</div>
<div class="t" style="left:12px;top:144.50px;line-height:24px;font-size:14px;color:#606366;font-weight:400;font-family:'Liberation Mono', monospace;letter-spacing:-0.400px;-webkit-text-stroke:0.2px #606366;">22</div>
<div class="t" style="left:92px;top:144.50px;line-height:24px;font-size:14px;color:#cc7832;font-weight:400;font-family:'Liberation Mono', monospace;letter-spacing:-0.400px;-webkit-text-stroke:0.3px #cc7832;">    private</div>
<div class="t" style="left:180px;top:144.50px;line-height:24px;font-size:14px;color:#a9b7c6;font-weight:400;font-family:'Liberation Mono', monospace;letter-spacing:-0.400px;-webkit-text-stroke:0.3px #a9b7c6;"> BrandService </div>
<div class="t" style="left:292px;top:144.50px;line-height:24px;font-size:14px;color:#9876aa;font-weight:400;font-family:'Liberation Mono', monospace;letter-spacing:-0.400px;-webkit-text-stroke:0.3px #9876aa;">brandService</div>
<div class="t" style="left:388px;top:144.50px;line-height:24px;font-size:14px;color:#cc7832;font-weight:400;font-family:'Liberation Mono', monospace;letter-spacing:-0.400px;-webkit-text-stroke:0.3px #cc7832;">;</div>
<div class="t" style="left:12px;top:168.50px;line-height:24px;font-size:14px;color:#606366;font-weight:400;font-family:'Liberation Mono', monospace;letter-spacing:-0.400px;-webkit-text-stroke:0.2px #606366;">23</div>
<div class="t" style="left:12px;top:192.50px;line-height:24px;font-size:14px;color:#606366;font-weight:400;font-family:'Liberation Mono', monospace;letter-spacing:-0.400px;-webkit-text-stroke:0.2px #606366;">24</div>
<div class="t" style="left:92px;top:192.50px;line-height:24px;font-size:14px;color:#bbb529;font-weight:400;font-family:'Liberation Mono', monospace;letter-spacing:-0.400px;-webkit-text-stroke:0.3px #bbb529;">    @Autowired</div>
<div class="t" style="left:12px;top:216.50px;line-height:24px;font-size:14px;color:#606366;font-weight:400;font-family:'Liberation Mono', monospace;letter-spacing:-0.400px;-webkit-text-stroke:0.2px #606366;">25</div>
<div class="t" style="left:92px;top:216.50px;line-height:24px;font-size:14px;color:#cc7832;font-weight:400;font-family:'Liberation Mono', monospace;letter-spacing:-0.400px;-webkit-text-stroke:0.3px #cc7832;">    private</div>
<div class="t" style="left:180px;top:216.50px;line-height:24px;font-size:14px;color:#a9b7c6;font-weight:400;font-family:'Liberation Mono', monospace;letter-spacing:-0.400px;-webkit-text-stroke:0.3px #a9b7c6;"> CategoryService </div>
<div class="t" style="left:316px;top:216.50px;line-height:24px;font-size:14px;color:#9876aa;font-weight:400;font-family:'Liberation Mono', monospace;letter-spacing:-0.400px;-webkit-text-stroke:0.3px #9876aa;">categoryService</div>
<div class="t" style="left:436px;top:216.50px;line-height:24px;font-size:14px;color:#cc7832;font-weight:400;font-family:'Liberation Mono', monospace;letter-spacing:-0.400px;-webkit-text-stroke:0.3px #cc7832;">;</div>
<div class="t" style="left:12px;top:240.50px;line-height:24px;font-size:14px;color:#606366;font-weight:400;font-family:'Liberation Mono', monospace;letter-spacing:-0.400px;-webkit-text-stroke:0.2px #606366;">26</div>
<div class="t" style="left:12px;top:264.50px;line-height:24px;font-size:14px;color:#606366;font-weight:400;font-family:'Liberation Mono', monospace;letter-spacing:-0.400px;-webkit-text-stroke:0.2px #606366;">27</div>
<div class="t" style="left:92px;top:264.50px;line-height:24px;font-size:14px;color:#bbb529;font-weight:400;font-family:'Liberation Mono', monospace;letter-spacing:-0.400px;-webkit-text-stroke:0.3px #bbb529;">    @Autowired</div>
<div class="t" style="left:12px;top:288.50px;line-height:24px;font-size:14px;color:#606366;font-weight:400;font-family:'Liberation Mono', monospace;letter-spacing:-0.400px;-webkit-text-stroke:0.2px #606366;">28</div>
<div class="t" style="left:92px;top:288.50px;line-height:24px;font-size:14px;color:#cc7832;font-weight:400;font-family:'Liberation Mono', monospace;letter-spacing:-0.400px;-webkit-text-stroke:0.3px #cc7832;">    private</div>
<div class="t" style="left:180px;top:288.50px;line-height:24px;font-size:14px;color:#a9b7c6;font-weight:400;font-family:'Liberation Mono', monospace;letter-spacing:-0.400px;-webkit-text-stroke:0.3px #a9b7c6;"> StringRedisTemplate </div>
<div class="t" style="left:348px;top:288.50px;line-height:24px;font-size:14px;color:#9876aa;font-weight:400;font-family:'Liberation Mono', monospace;letter-spacing:-0.400px;-webkit-text-stroke:0.3px #9876aa;">stringRedisTemplate</div>
<div class="t" style="left:500px;top:288.50px;line-height:24px;font-size:14px;color:#cc7832;font-weight:400;font-family:'Liberation Mono', monospace;letter-spacing:-0.400px;-webkit-text-stroke:0.3px #cc7832;">;</div>
<div class="t" style="left:12px;top:312.50px;line-height:24px;font-size:14px;color:#606366;font-weight:400;font-family:'Liberation Mono', monospace;letter-spacing:-0.400px;-webkit-text-stroke:0.2px #606366;">29</div>
<div class="t" style="left:12px;top:336.50px;line-height:24px;font-size:14px;color:#606366;font-weight:400;font-family:'Liberation Mono', monospace;letter-spacing:-0.400px;-webkit-text-stroke:0.2px #606366;">30</div>
<div class="t" style="left:92px;top:336.50px;line-height:24px;font-size:14px;color:#bbb529;font-weight:400;font-family:'Liberation Mono', monospace;letter-spacing:-0.400px;-webkit-text-stroke:0.3px #bbb529;">    @Autowired</div>
<div class="t" style="left:12px;top:360.50px;line-height:24px;font-size:14px;color:#606366;font-weight:400;font-family:'Liberation Mono', monospace;letter-spacing:-0.400px;-webkit-text-stroke:0.2px #606366;">31</div>
<div class="t" style="left:92px;top:360.50px;line-height:24px;font-size:14px;color:#cc7832;font-weight:400;font-family:'Liberation Mono', monospace;letter-spacing:-0.400px;-webkit-text-stroke:0.3px #cc7832;">    private</div>
<div class="t" style="left:180px;top:360.50px;line-height:24px;font-size:14px;color:#a9b7c6;font-weight:400;font-family:'Liberation Mono', monospace;letter-spacing:-0.400px;-webkit-text-stroke:0.3px #a9b7c6;"> RedissonClient </div>
<div class="t" style="left:308px;top:360.50px;line-height:24px;font-size:14px;color:#9876aa;font-weight:400;font-family:'Liberation Mono', monospace;letter-spacing:-0.400px;-webkit-text-stroke:0.3px #9876aa;">redissonClient</div>
<div class="t" style="left:420px;top:360.50px;line-height:24px;font-size:14px;color:#cc7832;font-weight:400;font-family:'Liberation Mono', monospace;letter-spacing:-0.400px;-webkit-text-stroke:0.3px #cc7832;">;</div>
<div class="t" style="left:12px;top:384.50px;line-height:24px;font-size:14px;color:#606366;font-weight:400;font-family:'Liberation Mono', monospace;letter-spacing:-0.400px;-webkit-text-stroke:0.2px #606366;">32</div>
<div class="t" style="left:12px;top:408.50px;line-height:24px;font-size:14px;color:#606366;font-weight:400;font-family:'Liberation Mono', monospace;letter-spacing:-0.400px;-webkit-text-stroke:0.2px #606366;">33</div>
<div class="t" style="left:92px;top:408.50px;line-height:24px;font-size:14px;color:#bbb529;font-weight:400;font-family:'Liberation Mono', monospace;letter-spacing:-0.400px;-webkit-text-stroke:0.3px #bbb529;">    @Test</div>
<div class="t" style="left:12px;top:432.50px;line-height:24px;font-size:14px;color:#606366;font-weight:400;font-family:'Liberation Mono', monospace;letter-spacing:-0.400px;-webkit-text-stroke:0.2px #606366;">34</div>
<div class="t" style="left:92px;top:432.50px;line-height:24px;font-size:14px;color:#cc7832;font-weight:400;font-family:'Liberation Mono', monospace;letter-spacing:-0.400px;-webkit-text-stroke:0.3px #cc7832;">    void</div>
<div class="t" style="left:156px;top:432.50px;line-height:24px;font-size:14px;color:#a9b7c6;font-weight:400;font-family:'Liberation Mono', monospace;letter-spacing:-0.400px;-webkit-text-stroke:0.3px #a9b7c6;"> </div>
<div class="t" style="left:164px;top:432.50px;line-height:24px;font-size:14px;color:#ffc66d;font-weight:400;font-family:'Liberation Mono', monospace;letter-spacing:-0.400px;-webkit-text-stroke:0.3px #ffc66d;">testRedisson</div>
<div class="t" style="left:260px;top:432.50px;line-height:24px;font-size:14px;color:#a9b7c6;font-weight:400;font-family:'Liberation Mono', monospace;letter-spacing:-0.400px;-webkit-text-stroke:0.3px #a9b7c6;">(){</div>
<div class="t" style="left:12px;top:456.50px;line-height:24px;font-size:14px;color:#606366;font-weight:400;font-family:'Liberation Mono', monospace;letter-spacing:-0.400px;-webkit-text-stroke:0.2px #606366;">35</div>
<div class="t" style="left:92px;top:456.50px;line-height:24px;font-size:14px;color:#a9b7c6;font-weight:400;font-family:'Liberation Mono', monospace;letter-spacing:-0.400px;-webkit-text-stroke:0.3px #a9b7c6;">        System.</div>
<div class="t" style="left:212px;top:456.50px;line-height:24px;font-size:14px;color:#9876aa;font-weight:400;font-family:'Liberation Mono', monospace;letter-spacing:-0.400px;font-style:italic;-webkit-text-stroke:0.3px #9876aa;">out</div>
<div class="t" style="left:236px;top:456.50px;line-height:24px;font-size:14px;color:#a9b7c6;font-weight:400;font-family:'Liberation Mono', monospace;letter-spacing:-0.400px;-webkit-text-stroke:0.3px #a9b7c6;">.println(</div>
<div class="t" style="left:308px;top:456.50px;line-height:24px;font-size:14px;color:#9876aa;font-weight:400;font-family:'Liberation Mono', monospace;letter-spacing:-0.400px;-webkit-text-stroke:0.3px #9876aa;">redissonClient</div>
<div class="t" style="left:420px;top:456.50px;line-height:24px;font-size:14px;color:#a9b7c6;font-weight:400;font-family:'Liberation Mono', monospace;letter-spacing:-0.400px;-webkit-text-stroke:0.3px #a9b7c6;">)</div>
<div class="t" style="left:428px;top:456.50px;line-height:24px;font-size:14px;color:#cc7832;font-weight:400;font-family:'Liberation Mono', monospace;letter-spacing:-0.400px;-webkit-text-stroke:0.3px #cc7832;">;</div>
<div class="t" style="left:12px;top:480.50px;line-height:24px;font-size:14px;color:#606366;font-weight:400;font-family:'Liberation Mono', monospace;letter-spacing:-0.400px;-webkit-text-stroke:0.2px #606366;">36</div>
<div class="t" style="left:92px;top:480.50px;line-height:24px;font-size:14px;color:#a9b7c6;font-weight:400;font-family:'Liberation Mono', monospace;letter-spacing:-0.400px;-webkit-text-stroke:0.3px #a9b7c6;">    }</div>
<div class="t" style="left:12px;top:504.50px;line-height:24px;font-size:14px;color:#606366;font-weight:400;font-family:'Liberation Mono', monospace;letter-spacing:-0.400px;-webkit-text-stroke:0.2px #606366;">37</div>
</div>
<div style="left:682px;top:87px;width:22px;height:22px;border:1px solid #4a4d4f;background:#33402f;"></div>
<div class="t" style="left:685px;top:88.50px;line-height:20px;font-size:14px;color:#a9b7c6;font-weight:400;font-family:'Liberation Mono', monospace;letter-spacing:-0.400px;-webkit-text-stroke:0.3px #a9b7c6;">...</div>
<svg style="left:613px;top:92px;" width="13" height="13" viewBox="0 0 13 13"><rect x="0.5" y="0.5" width="11" height="11" fill="#2b2b2b" stroke="#6e6e6e"/><path d="M3 6H9M6 3V9" stroke="#8a8a8a"/></svg>
<svg style="left:613px;top:524.5px;" width="13" height="14" viewBox="0 0 13 14"><path d="M0.5 0.5H11.5V8L6 13L0.5 8Z" fill="#2b2b2b" stroke="#6e6e6e"/><path d="M3 6H9" stroke="#8a8a8a"/></svg>
<svg style="left:613px;top:571px;" width="13" height="14" viewBox="0 0 13 14"><path d="M0.5 13.5H11.5V6L6 0.5L0.5 6Z" fill="#2b2b2b" stroke="#6e6e6e"/><path d="M3 8H9" stroke="#8a8a8a"/></svg>
<div style="left:657px;top:542px;width:1px;height:24px;background:#3b3b3b;"></div>
<svg style="left:569.5px;top:138px;" width="17" height="15" viewBox="0 0 17 15"><path d="M16 0.5C15.5 9 11.5 13.5 5.5 13.5C2.5 13.5 0.5 12 0.5 9.5C0.5 5 6 1.5 16 0.5Z" fill="#62a64f"/><path d="M1.5 13C5 11.5 9 9 12.5 5.5" stroke="#2f3a2c" stroke-width="0.9" fill="none"/></svg>
<svg style="left:579px;top:161px;" width="17" height="17" viewBox="0 0 17 17"><circle cx="5.8" cy="6" r="5.6" fill="#4fad5b"/><path d="M3 5.8L5.2 8L8.8 4.2" stroke="#2f3133" stroke-width="1.4" fill="none"/><path d="M8.2 6.8L15.8 11.5L8.2 16.2Z" fill="#4fad5b" stroke="#313335" stroke-width="0.8"/></svg>
<svg style="left:569.5px;top:234.5px;" width="17" height="17" viewBox="0 0 17 17"><circle cx="7.5" cy="7.5" r="7.3" fill="#62a64f"/><path d="M2.5 2.5L8.5 14.5" stroke="#313335" stroke-width="1.4"/><path d="M6 10.8H12" stroke="#b9c0c6" stroke-width="2.2"/><path d="M11 7.3L15.5 10.8L11 14.3Z" fill="#b9c0c6"/></svg>
<svg style="left:569.5px;top:306.5px;" width="17" height="17" viewBox="0 0 17 17"><circle cx="7.5" cy="7.5" r="7.3" fill="#62a64f"/><path d="M2.5 2.5L8.5 14.5" stroke="#313335" stroke-width="1.4"/><path d="M6 10.8H12" stroke="#b9c0c6" stroke-width="2.2"/><path d="M11 7.3L15.5 10.8L11 14.3Z" fill="#b9c0c6"/></svg>
<svg style="left:569.5px;top:378.5px;" width="17" height="17" viewBox="0 0 17 17"><circle cx="7.5" cy="7.5" r="7.3" fill="#62a64f"/><path d="M2.5 2.5L8.5 14.5" stroke="#313335" stroke-width="1.4"/><path d="M6 10.8H12" stroke="#b9c0c6" stroke-width="2.2"/><path d="M11 7.3L15.5 10.8L11 14.3Z" fill="#b9c0c6"/></svg>
<svg style="left:569.5px;top:450.5px;" width="17" height="17" viewBox="0 0 17 17"><circle cx="7.5" cy="7.5" r="7.3" fill="#62a64f"/><path d="M2.5 2.5L8.5 14.5" stroke="#313335" stroke-width="1.4"/><path d="M6 10.8H12" stroke="#b9c0c6" stroke-width="2.2"/><path d="M11 7.3L15.5 10.8L11 14.3Z" fill="#b9c0c6"/></svg>
<svg style="left:579px;top:521px;" width="17" height="17" viewBox="0 0 17 17"><circle cx="5.8" cy="6" r="5.6" fill="#4fad5b"/><path d="M3 5.8L5.2 8L8.8 4.2" stroke="#2f3133" stroke-width="1.4" fill="none"/><path d="M8.2 6.8L15.8 11.5L8.2 16.2Z" fill="#4fad5b" stroke="#313335" stroke-width="0.8"/></svg>
<div style="left:642px;top:417px;width:401px;height:176px;border:3px solid #ec3a3c;"></div>
<svg style="left:1765px;top:92px;" width="13" height="12" viewBox="0 0 13 12"><path d="M6.5 0.5L12.5 11.5H0.5Z" fill="#e8a33e"/><path d="M6.5 4V8M6.5 9.5V10.5" stroke="#2b2b2b" stroke-width="1.5"/></svg>
<div class="t" style="left:1780px;top:89.00px;line-height:20px;font-size:14px;color:#bbbbbb;font-weight:400;font-family:'Liberation Sans', sans-serif;">2</div>
<svg style="left:1796px;top:92px;" width="13" height="12" viewBox="0 0 13 12"><path d="M6.5 0.5L12.5 11.5H0.5Z" fill="#8b8b6e"/><path d="M6.5 4V8M6.5 9.5V10.5" stroke="#2b2b2b" stroke-width="1.5"/></svg>
<div class="t" style="left:1811.5px;top:89.00px;line-height:20px;font-size:14px;color:#bbbbbb;font-weight:400;font-family:'Liberation Sans', sans-serif;">2</div>
<svg style="left:1826px;top:92px;" width="14" height="14" viewBox="0 0 14 14"><path d="M1 5L5 9L13 1" stroke="#4aa046" stroke-width="2.2" fill="none"/><path d="M1 12L4 10L7 12L10 10L13 12" stroke="#4aa046" stroke-width="1.2" fill="none"/></svg>
<div class="t" style="left:1843px;top:89.00px;line-height:20px;font-size:14px;color:#bbbbbb;font-weight:400;font-family:'Liberation Sans', sans-serif;">8</div>
<svg style="left:1860px;top:95px;" width="10" height="6" viewBox="0 0 10 6"><path d="M1 5L5 1L9 5" stroke="#bbb" stroke-width="1.3" fill="none"/></svg>
<svg style="left:1881px;top:96px;" width="10" height="6" viewBox="0 0 10 6"><path d="M1 1L5 5L9 1" stroke="#bbb" stroke-width="1.3" fill="none"/></svg>
<div style="left:1888px;top:124px;width:9px;height:86px;background:#4b4d4e;"></div>
<div style="left:1881px;top:125px;width:16px;height:2px;background:#4a8a3a;"></div>
<div style="left:1880px;top:168px;width:1px;height:73px;background:#4a8a3a;"></div>
<div style="left:1884px;top:220px;width:13px;height:2px;background:#4a8a3a;"></div>
<div style="left:1884px;top:278px;width:13px;height:2px;background:#6e6b5b;"></div>
<div style="left:1884px;top:382px;width:13px;height:2px;background:#e8a33e;"></div>
<div style="left:1884px;top:394px;width:13px;height:2px;background:#8b7f62;"></div>
<div style="left:22px;top:606px;width:1876px;height:1px;background:#323232;"></div>
<div style="left:22px;top:607px;width:1876px;height:26px;background:#3c3f41;"></div>
<div class="t" style="left:28.2px;top:610.00px;line-height:20px;font-size:14px;color:#bbbbbb;font-weight:400;font-family:'Liberation Sans', sans-serif;letter-spacing:-0.693px;">Run:</div>
<svg style="left:76px;top:614px;" width="13" height="12" viewBox="0 0 13 12"><path d="M5.5 0.5L0.5 6L5.5 11.5Z" fill="#c6582a"/><path d="M7.5 0.5L12.5 6L7.5 11.5Z" fill="#4a8a3a"/></svg>
<div class="t" style="left:94.3px;top:610.00px;line-height:20px;font-size:14px;color:#bbbbbb;font-weight:400;font-family:'Liberation Sans', sans-serif;letter-spacing:-0.177px;">GulimallProductApplicationTests.testRedisson</div>
<svg style="left:378px;top:616px;" width="9" height="9" viewBox="0 0 9 9"><path d="M0.5 0.5L8.5 8.5M8.5 0.5L0.5 8.5" stroke="#7b7e80" stroke-width="1.1"/></svg>
<div style="left:62px;top:631px;width:336px;height:3px;background:#787b7d;border-radius:1.5px;"></div>
<svg style="left:1851px;top:613px;" width="14" height="14" viewBox="0 0 14 14"><circle cx="7" cy="7" r="4.1" fill="none" stroke="#bbb" stroke-width="3.6"/><rect x="5.5" y="-0.6" width="3" height="3.5" rx="0.6" fill="#bbb" transform="rotate(0 7 7)"/><rect x="5.5" y="-0.6" width="3" height="3.5" rx="0.6" fill="#bbb" transform="rotate(60 7 7)"/><rect x="5.5" y="-0.6" width="3" height="3.5" rx="0.6" fill="#bbb" transform="rotate(120 7 7)"/><rect x="5.5" y="-0.6" width="3" height="3.5" rx="0.6" fill="#bbb" transform="rotate(180 7 7)"/><rect x="5.5" y="-0.6" width="3" height="3.5" rx="0.6" fill="#bbb" transform="rotate(240 7 7)"/><rect x="5.5" y="-0.6" width="3" height="3.5" rx="0.6" fill="#bbb" transform="rotate(300 7 7)"/></svg>
<div style="left:1878px;top:619px;width:13px;height:2px;background:#bbb;"></div>
<div style="left:22px;top:633px;width:1876px;height:1px;background:#323232;"></div>
<div style="left:22px;top:634px;width:28px;height:363px;background:#3c3f41;"></div>
<div style="left:50px;top:634px;width:1px;height:363px;background:#323232;"></div>
<svg style="left:32px;top:642px;" width="10" height="12" viewBox="0 0 10 12"><path d="M0 0L10 6L0 12Z" fill="#4aa046"/></svg>
<svg style="left:28px;top:666px;" width="17" height="15" viewBox="0 0 17 15"><path d="M1 3L8 8L1 13Z" fill="#5a5d5f"/><circle cx="11.5" cy="6" r="4.5" fill="#5a5d5f"/><text x="11.5" y="9" text-anchor="middle" font-family="Liberation Sans" font-weight="700" font-size="9" fill="#3c3f41">9</text></svg>
<svg style="left:29px;top:692px;" width="14" height="16" viewBox="0 0 14 16"><rect x="0.5" y="5.5" width="3" height="3" fill="none" stroke="#bbb"/><rect x="10.5" y="5.5" width="3" height="3" fill="none" stroke="#bbb"/><path d="M3 3A5 5 0 0 1 11 3M11 13A5 5 0 0 1 3 13" fill="none" stroke="#bbb" stroke-width="1.5"/><path d="M9 1L11.5 3.5L9 5M5 11L2.5 13.5L5 15" fill="none" stroke="#bbb" stroke-width="1.2"/></svg>
<svg style="left:29px;top:718px;" width="15" height="16" viewBox="0 0 15 16"><path d="M2 14L9 7A4 4 0 0 1 14 2L11.5 4.5L12.5 5.5L15 3A4 4 0 0 1 10 8L3 15Z" fill="#bbb"/></svg>
<div style="left:26px;top:742px;width:20px;height:1px;background:#515456;"></div>
<div style="left:31px;top:754px;width:10px;height:10px;background:#5f5f5f;"></div>
<svg style="left:29px;top:777px;" width="15" height="15" viewBox="0 0 15 15"><ellipse cx="6" cy="8" rx="4" ry="5" fill="#5a5d5f"/><path d="M1 5H11M0 8H12M1 11H11" stroke="#5a5d5f" stroke-width="1.2"/><path d="M8 14L14 8M10 8H14V12" stroke="#5a5d5f" stroke-width="1.6" fill="none"/></svg>
<svg style="left:29px;top:805px;" width="15" height="12" viewBox="0 0 15 12"><path d="M0 3H4L5.5 1H9.5L11 3H15V12H0Z" fill="#5a5d5f"/><circle cx="7.5" cy="7.5" r="2.5" fill="#3c3f41"/></svg>
<svg style="left:29px;top:830px;" width="15" height="15" viewBox="0 0 15 15"><path d="M5 1H14V14H5M5 4V1M5 11V14" fill="none" stroke="#5a5d5f" stroke-width="1.4"/><path d="M0 7.5H9M6 4.5L9 7.5L6 10.5" fill="none" stroke="#5a5d5f" stroke-width="1.6"/></svg>
<div style="left:26px;top:853px;width:20px;height:1px;background:#515456;"></div>
<svg style="left:29px;top:865px;" width="14" height="10" viewBox="0 0 14 10"><rect x="0" y="0" width="6" height="4" fill="#bbb"/><rect x="7" y="0" width="7" height="4" fill="#bbb"/><rect x="0" y="5" width="14" height="5" fill="#bbb"/></svg>
<div style="left:26px;top:886px;width:20px;height:1px;background:#515456;"></div>
<svg style="left:28px;top:895px;" width="15" height="16" viewBox="0 0 15 16"><path d="M8 1L14 7L12 8L10 11L5 6L8 4Z" fill="#bbb"/><path d="M1 15L6 10" stroke="#bbb" stroke-width="1.6"/></svg>
<div style="left:51px;top:634px;width:1847px;height:28px;background:#3c3f41;"></div>
<div style="left:51px;top:661px;width:1819px;height:1px;background:#323232;"></div>
<div style="left:55px;top:637px;width:22px;height:22px;background:#5c6164;border-radius:3px;"></div>
<svg style="left:59px;top:642px;" width="14" height="11" viewBox="0 0 14 11"><path d="M1 5.5L5 9.5L13 1.5" fill="none" stroke="#d0d0d0" stroke-width="2.2"/></svg>
<div style="left:81px;top:637px;width:22px;height:22px;background:#5c6164;border-radius:3px;"></div>
<svg style="left:85px;top:641px;" width="14" height="14" viewBox="0 0 14 14"><circle cx="7" cy="7" r="5.5" fill="none" stroke="#d0d0d0" stroke-width="1.8"/><path d="M3 11L11 3" stroke="#d0d0d0" stroke-width="1.8"/></svg>
<div style="left:108px;top:639px;width:1px;height:19px;background:#515456;"></div>
<svg style="left:137px;top:643px;" width="9" height="9" viewBox="0 0 9 9"><path d="M1 1L4 4.5L1 8M5 1L8 4.5L5 8" fill="none" stroke="#aaa" stroke-width="1"/></svg>
<svg style="left:155px;top:642px;" width="13" height="12" viewBox="0 0 13 12"><path d="M1 6L5 10L12 1.5" fill="none" stroke="#4aa046" stroke-width="2.4"/></svg>
<div class="t" style="left:172.2px;top:638.00px;line-height:20px;font-size:14px;color:#bbbbbb;font-weight:400;font-family:'Liberation Sans', sans-serif;letter-spacing:-0.445px;">Tests passed: 1</div>
<div class="t" style="left:268.3px;top:638.00px;line-height:20px;font-size:14px;color:#7f8284;font-weight:400;font-family:'Liberation Sans', sans-serif;letter-spacing:0.040px;">of 1 test – 365 ms</div>
<div style="left:51px;top:662px;width:99px;height:335px;background:#3c3f41;"></div>
<div style="left:51px;top:663px;width:99px;height:20px;background:#0d293e;"></div>
<svg style="left:57px;top:669px;" width="9" height="6" viewBox="0 0 9 6"><path d="M1 1L4.5 5L8 1" fill="none" stroke="#bbb" stroke-width="1.2"/></svg>
<svg style="left:76px;top:667px;" width="13" height="11" viewBox="0 0 13 11"><path d="M1 5.5L4.5 9.5L12 1.5" fill="none" stroke="#4aa046" stroke-width="2.4"/></svg>
<div class="t" style="left:93.5px;top:663.00px;line-height:20px;font-size:14px;color:#d8d8d8;font-weight:400;font-family:'Liberation Sans', sans-serif;">G</div>
<div style="left:103.5px;top:663px;width:5px;height:20px;background:#0d293e;"></div>
<div style="left:104px;top:668px;width:1px;height:10px;background:#9aa4ab;"></div>
<div class="t" style="left:109.4px;top:663.50px;line-height:20px;font-size:11.5px;color:#d8d8d8;font-weight:400;font-family:'Liberation Sans', sans-serif;letter-spacing:-0.519px;">365 ms</div>
<svg style="left:94px;top:688px;" width="13" height="11" viewBox="0 0 13 11"><path d="M1 5.5L4.5 9.5L12 1.5" fill="none" stroke="#4aa046" stroke-width="2.4"/></svg>
<div class="t" style="left:111.6px;top:684.00px;line-height:20px;font-size:11.5px;color:#7f8284;font-weight:400;font-family:'Liberation Sans', sans-serif;letter-spacing:-0.502px;">365 ms</div>
<div style="left:52px;top:988px;width:26px;height:8px;background:#4e5052;"></div>
<div style="left:150px;top:662px;width:1px;height:335px;background:#323232;"></div>
<div style="left:151px;top:662px;width:1719px;height:335px;background:#2b2b2b;"></div>
<div class="abs" style="left:151px;top:662px;width:1717px;height:325px;overflow:hidden;">
<div class="t" style="left:13px;top:-14.50px;line-height:24px;font-size:14px;color:#bbbbbb;font-weight:400;font-family:'Liberation Mono', monospace;letter-spacing:-0.400px;-webkit-text-stroke:0.3px #bbbbbb;">2023-07-14 17:49:58.637  INFO 18788 --- [           main] com.alibaba.nacos.client.naming          : initializer namespace from System Property :null</div>
<div class="t" style="left:13px;top:9.50px;line-height:24px;font-size:14px;color:#bbbbbb;font-weight:400;font-family:'Liberation Mono', monospace;letter-spacing:-0.400px;-webkit-text-stroke:0.3px #bbbbbb;">2023-07-14 17:49:58.637  INFO 18788 --- [           main] com.alibaba.nacos.client.naming          : initializer namespace from System Environment :null</div>
<div class="t" style="left:13px;top:33.50px;line-height:24px;font-size:14px;color:#bbbbbb;font-weight:400;font-family:'Liberation Mono', monospace;letter-spacing:-0.400px;-webkit-text-stroke:0.3px #bbbbbb;">2023-07-14 17:49:58.637  INFO 18788 --- [           main] com.alibaba.nacos.client.naming          : initializer namespace from System Property :null</div>
<div class="t" style="left:13px;top:57.50px;line-height:24px;font-size:14px;color:#bbbbbb;font-weight:400;font-family:'Liberation Mono', monospace;letter-spacing:-0.400px;-webkit-text-stroke:0.3px #bbbbbb;">2023-07-14 17:50:00.784  INFO 18788 --- [           main] o.s.cloud.commons.util.InetUtils         : Cannot determine local hostname</div>
<div class="t" style="left:13px;top:81.50px;line-height:24px;font-size:14px;color:#bbbbbb;font-weight:400;font-family:'Liberation Mono', monospace;letter-spacing:-0.400px;-webkit-text-stroke:0.3px #bbbbbb;">2023-07-14 17:50:00.834  WARN 18788 --- [           main] iguration$LoadBalancerCaffeineWarnLogger : Spring Cloud LoadBalancer is currently working with the default cache. While this cache implementation is useful for development and tests, it&#x27;s recommended to use Caffeine cache in production.</div>
<div class="t" style="left:13px;top:105.50px;line-height:24px;font-size:14px;color:#bbbbbb;font-weight:400;font-family:'Liberation Mono', monospace;letter-spacing:-0.400px;-webkit-text-stroke:0.3px #bbbbbb;">2023-07-14 17:50:00.880  INFO 18788 --- [           main] c.a.g.p.GulimallProductApplicationTests  : Started GulimallProductApplicationTests in 12.703 seconds (JVM running for 14.508)</div>
<div class="t" style="left:13px;top:129.50px;line-height:24px;font-size:14px;color:#bbbbbb;font-weight:400;font-family:'Liberation Mono', monospace;letter-spacing:-0.400px;-webkit-text-stroke:0.3px #bbbbbb;">2023-07-14 17:50:00.885  INFO 18788 --- [           main] c.a.n.client.config.impl.ClientWorker    : [fixed-localhost_8848] [subscribe] gulimall-product+DEFAULT_GROUP</div>
<div class="t" style="left:13px;top:153.50px;line-height:24px;font-size:14px;color:#bbbbbb;font-weight:400;font-family:'Liberation Mono', monospace;letter-spacing:-0.400px;-webkit-text-stroke:0.3px #bbbbbb;">2023-07-14 17:50:00.888  INFO 18788 --- [           main] c.a.nacos.client.config.impl.CacheData   : [fixed-localhost_8848] [add-listener] ok, tenant=, dataId=gulimall-product, group=DEFAULT_GROUP, cnt=1</div>
<div class="t" style="left:13px;top:177.50px;line-height:24px;font-size:14px;color:#bbbbbb;font-weight:400;font-family:'Liberation Mono', monospace;letter-spacing:-0.400px;-webkit-text-stroke:0.3px #bbbbbb;">2023-07-14 17:50:00.888  INFO 18788 --- [           main] c.a.n.client.config.impl.ClientWorker    : [fixed-localhost_8848] [subscribe] gulimall-product.properties+DEFAULT_GROUP</div>
<div class="t" style="left:13px;top:201.50px;line-height:24px;font-size:14px;color:#bbbbbb;font-weight:400;font-family:'Liberation Mono', monospace;letter-spacing:-0.400px;-webkit-text-stroke:0.3px #bbbbbb;">2023-07-14 17:50:00.888  INFO 18788 --- [           main] c.a.nacos.client.config.impl.CacheData   : [fixed-localhost_8848] [add-listener] ok, tenant=, dataId=gulimall-product.properties, group=DEFAULT_GROUP, cnt=1</div>
<div class="t" style="left:13px;top:225.50px;line-height:24px;font-size:14px;color:#bbbbbb;font-weight:400;font-family:'Liberation Mono', monospace;letter-spacing:-0.400px;-webkit-text-stroke:0.3px #bbbbbb;">org.redisson.Redisson@433b1597</div>
<div class="t" style="left:13px;top:273.50px;line-height:24px;font-size:14px;color:#bbbbbb;font-weight:400;font-family:'Liberation Mono', monospace;letter-spacing:-0.400px;-webkit-text-stroke:0.3px #bbbbbb;">Process finished with exit code 0</div>
</div>
<div style="left:157px;top:887px;width:251px;height:19px;border:3px solid #ec3a3c;"></div>
<div style="left:165px;top:988px;width:190px;height:8px;background:#4e5052;"></div>
<div style="left:1859px;top:938px;width:9px;height:58px;background:#4e5052;"></div>
<div style="left:1870px;top:662px;width:28px;height:335px;background:#3c3f41;"></div>
<div style="left:1869px;top:662px;width:1px;height:335px;background:#323232;"></div>
<svg style="left:1878px;top:671px;" width="13" height="13" viewBox="0 0 13 13"><path d="M6.5 13V1M1.5 6L6.5 1L11.5 6" fill="none" stroke="#5a5d5f" stroke-width="1.6"/></svg>
<svg style="left:1878px;top:697px;" width="13" height="13" viewBox="0 0 13 13"><path d="M6.5 0V12M1.5 7L6.5 12L11.5 7" fill="none" stroke="#5a5d5f" stroke-width="1.6"/></svg>
<svg style="left:1877px;top:722px;" width="15" height="14" viewBox="0 0 15 14"><path d="M0 1.5H14M0 6.5H11A3 3 0 0 1 11 12.5H6M0 11.5H3" fill="none" stroke="#bbb" stroke-width="1.5"/><path d="M8 10L5.5 12.5L8 15" fill="none" stroke="#bbb" stroke-width="1.3"/></svg>
<div style="left:1872px;top:744px;width:23px;height:22px;background:#5c6164;border-radius:3px;"></div>
<svg style="left:1877px;top:747px;" width="14" height="15" viewBox="0 0 14 15"><path d="M0 1H5M9 1H14M0 13H14M7 2V10M4 7L7 10L10 7" fill="none" stroke="#d0d0d0" stroke-width="1.6"/></svg>
<svg style="left:1877px;top:774px;" width="15" height="14" viewBox="0 0 15 14"><rect x="3" y="0" width="9" height="4" fill="#bbb"/><rect x="0" y="5" width="15" height="6" fill="#bbb"/><rect x="3" y="9" width="9" height="5" fill="#bbb" stroke="#3c3f41"/></svg>
<svg style="left:1878px;top:799px;" width="13" height="15" viewBox="0 0 13 15"><rect x="0" y="2" width="13" height="2" fill="#bbb"/><rect x="4.5" y="0" width="4" height="2" fill="#bbb"/><path d="M1.5 5H11.5L10.5 15H2.5Z" fill="#bbb"/></svg>
<div style="left:0px;top:997px;width:1920px;height:23px;background:#3c3f41;"></div>
<div style="left:0px;top:997px;width:1920px;height:1px;background:#323232;"></div>
<div style="left:71px;top:998px;width:56px;height:21px;background:#2e3032;"></div>
<svg style="left:31px;top:1004px;" width="10" height="13" viewBox="0 0 10 13"><circle cx="2" cy="2" r="1.6" fill="#bbb"/><circle cx="2" cy="11" r="1.6" fill="#bbb"/><circle cx="8" cy="3" r="1.6" fill="#bbb"/><path d="M2 2V11M8 3C8 7 2 6 2 10" stroke="#bbb" stroke-width="1.4" fill="none"/></svg>
<div class="t" style="left:46.7px;top:1000.00px;line-height:20px;font-size:12.5px;color:#bbbbbb;font-weight:400;font-family:'Liberation Sans', sans-serif;letter-spacing:-0.124px;">Git</div>
<svg style="left:82px;top:1005px;" width="8" height="10" viewBox="0 0 8 10"><path d="M0 0L8 5L0 10Z" fill="#e0e0e0"/></svg>
<div class="t" style="left:97.3px;top:1000.00px;line-height:20px;font-size:12.5px;color:#e0e0e0;font-weight:400;font-family:'Liberation Sans', sans-serif;letter-spacing:-0.710px;">Run</div>
<svg style="left:139px;top:1004px;" width="11" height="11" viewBox="0 0 11 11"><path d="M0 1H2M4 1H11M0 5.5H2M4 5.5H11M0 10H2M4 10H11" stroke="#bbb" stroke-width="1.6"/></svg>
<div class="t" style="left:154.4px;top:1000.00px;line-height:20px;font-size:12.5px;color:#bbbbbb;font-weight:400;font-family:'Liberation Sans', sans-serif;letter-spacing:-1.171px;">TODO</div>
<svg style="left:207px;top:1004px;" width="12" height="12" viewBox="0 0 12 12"><circle cx="6" cy="6" r="6" fill="#bbb"/><path d="M6 2.5V7M6 8.5V9.8" stroke="#3c3f41" stroke-width="1.6"/></svg>
<div class="t" style="left:223.2px;top:1000.00px;line-height:20px;font-size:12.5px;color:#bbbbbb;font-weight:400;font-family:'Liberation Sans', sans-serif;letter-spacing:-0.499px;">Problems</div>
<svg style="left:294px;top:1004px;" width="12" height="11" viewBox="0 0 12 11"><rect x="0" y="0" width="12" height="11" fill="#bbb"/><path d="M2 3L5 5.5L2 8" stroke="#3c3f41" stroke-width="1.3" fill="none"/></svg>
<div class="t" style="left:310px;top:1000.00px;line-height:20px;font-size:12.5px;color:#bbbbbb;font-weight:400;font-family:'Liberation Sans', sans-serif;letter-spacing:-0.279px;">Terminal</div>
<svg style="left:376px;top:1003px;" width="13" height="13" viewBox="0 0 13 13"><circle cx="6.5" cy="6.5" r="6" fill="#bbb"/><path d="M5 3.5L9.5 6.5L5 9.5Z" fill="#3c3f41"/></svg>
<div class="t" style="left:392.5px;top:1000.00px;line-height:20px;font-size:12.5px;color:#bbbbbb;font-weight:400;font-family:'Liberation Sans', sans-serif;letter-spacing:-0.679px;">Services</div>
<svg style="left:455px;top:1003px;" width="13" height="14" viewBox="0 0 13 14"><circle cx="6" cy="7" r="5" fill="none" stroke="#bbb" stroke-width="1.5"/><path d="M6 4V7H8" stroke="#bbb" fill="none"/><path d="M8 8L13 11L8 14Z" fill="#bbb"/></svg>
<div class="t" style="left:472.5px;top:1000.00px;line-height:20px;font-size:12.5px;color:#bbbbbb;font-weight:400;font-family:'Liberation Sans', sans-serif;letter-spacing:-0.262px;">Profiler</div>
<svg style="left:529px;top:1003px;" width="13" height="13" viewBox="0 0 13 13"><path d="M2 3L6 1L9 3L8 5L6 4L12 11L10.5 12.5L4.5 6L3 7Z" fill="#bbb"/></svg>
<div class="t" style="left:546px;top:1000.00px;line-height:20px;font-size:12.5px;color:#bbbbbb;font-weight:400;font-family:'Liberation Sans', sans-serif;letter-spacing:-0.259px;">Build</div>
<svg style="left:596px;top:1003px;" width="12" height="13" viewBox="0 0 12 13"><ellipse cx="6" cy="2.5" rx="5.5" ry="2" fill="#bbb"/><path d="M0.5 4V11C0.5 12 3 13 6 13S11.5 12 11.5 11V4" fill="#bbb"/><path d="M1 7C2 8 10 8 11 7M1 10C2 11 10 11 11 10" stroke="#3c3f41" fill="none"/></svg>
<div class="t" style="left:613px;top:1000.00px;line-height:20px;font-size:12.5px;color:#bbbbbb;font-weight:400;font-family:'Liberation Sans', sans-serif;letter-spacing:-0.689px;">Database Changes</div>
<svg style="left:734px;top:1003px;" width="13" height="13" viewBox="0 0 13 13"><path d="M6.5 0.5L12.5 3.5L6.5 6.5L0.5 3.5Z" fill="#bbb"/><path d="M0.5 6.5L6.5 9.5L12.5 6.5M0.5 9.5L6.5 12.5L12.5 9.5" fill="none" stroke="#bbb" stroke-width="1.2"/></svg>
<div class="t" style="left:751px;top:1000.00px;line-height:20px;font-size:12.5px;color:#bbbbbb;font-weight:400;font-family:'Liberation Sans', sans-serif;letter-spacing:-0.493px;">Dependencies</div>
<div style="left:0px;top:1019px;width:1920px;height:1px;background:#323232;"></div>
<div style="left:0px;top:1020px;width:1920px;height:20px;background:#3c3f41;"></div>
<svg style="left:11px;top:1023px;" width="14" height="14" viewBox="0 0 14 14"><rect x="3.5" y="0.5" width="10" height="10" fill="none" stroke="#9a9a9a"/><path d="M0.5 3V13.5H11" fill="none" stroke="#9a9a9a"/></svg>
<div class="t" style="left:39px;top:1020.00px;line-height:20px;font-size:13.5px;color:#bbbbbb;font-weight:400;font-family:'Liberation Sans', sans-serif;letter-spacing:0.021px;">Tests passed: 1 (2 minutes ago)</div>
<svg style="left:1638px;top:1023px;" width="15" height="14" viewBox="0 0 15 14"><rect x="0" y="0" width="7" height="6.5" fill="#f25022"/><rect x="8" y="0" width="7" height="6.5" fill="#7fba00"/><rect x="0" y="7.5" width="7" height="6.5" fill="#00a4ef"/><rect x="8" y="7.5" width="7" height="6.5" fill="#ffb900"/></svg>
<div class="t" style="left:1662.7px;top:1020.00px;line-height:20px;font-size:13.5px;color:#bbbbbb;font-weight:400;font-family:'Liberation Sans', sans-serif;letter-spacing:0.303px;">40:18</div>
<div class="t" style="left:1710px;top:1020.00px;line-height:20px;font-size:13.5px;color:#bbbbbb;font-weight:400;font-family:'Liberation Sans', sans-serif;letter-spacing:-1.027px;">LF</div>
<div class="t" style="left:1736.4px;top:1020.00px;line-height:20px;font-size:13.5px;color:#bbbbbb;font-weight:400;font-family:'Liberation Sans', sans-serif;letter-spacing:-0.169px;">UTF-8</div>
<div class="t" style="left:1786px;top:1020.00px;line-height:20px;font-size:13.5px;color:#bbbbbb;font-weight:400;font-family:'Liberation Sans', sans-serif;letter-spacing:0.220px;">Tab*</div>
<svg style="left:1827px;top:1023px;" width="11" height="15" viewBox="0 0 11 15"><circle cx="2" cy="2" r="1.6" fill="#bbb"/><circle cx="2" cy="13" r="1.6" fill="#bbb"/><circle cx="9" cy="3" r="1.6" fill="#bbb"/><path d="M2 2V13M9 3C9 8 2 7 2 12" stroke="#bbb" stroke-width="1.5" fill="none"/></svg>
<div class="t" style="left:1843.4px;top:1020.00px;line-height:20px;font-size:13.5px;color:#bbbbbb;font-weight:400;font-family:'Liberation Sans', sans-serif;letter-spacing:0.024px;">master</div>
<svg style="left:1894px;top:1024px;" width="13" height="12" viewBox="0 0 13 12"><rect x="3" y="5" width="10" height="7" fill="#bbb"/><path d="M1 6V3A2.5 2.5 0 0 1 6 3V5" fill="none" stroke="#bbb" stroke-width="1.4"/></svg>
</body></html>
